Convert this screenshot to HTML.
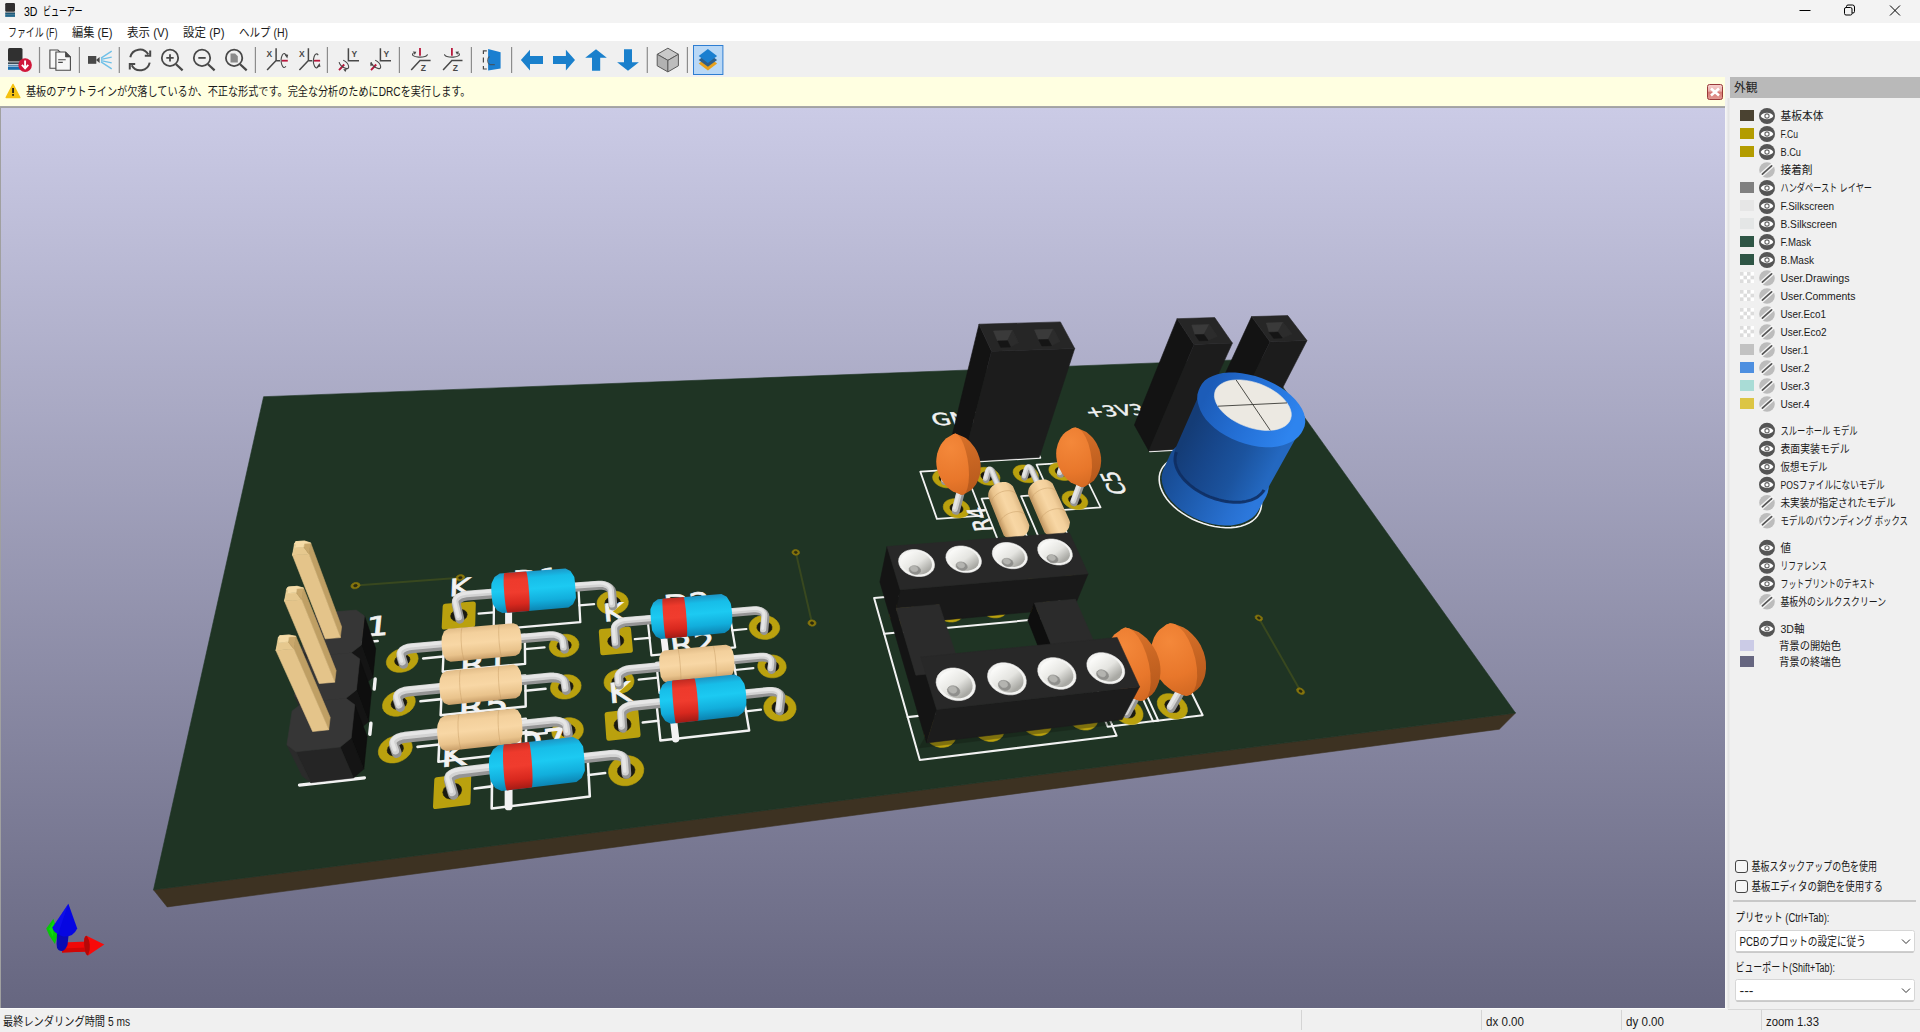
<!DOCTYPE html>
<html lang="ja"><head><meta charset="utf-8"><title>3D ビューアー</title>
<style>
html,body{margin:0;padding:0;}
body{width:1920px;height:1032px;overflow:hidden;position:relative;background:#f0f0f0;font-family:"Liberation Sans","Noto Sans CJK JP",sans-serif;}
.abs{position:absolute;}
#titlebar{left:0;top:0;width:1920px;height:23px;background:#f3f3f3;}
#menubar{left:0;top:23px;width:1920px;height:18px;background:#fff;}
#toolbar{left:0;top:41px;width:1920px;height:36px;background:#f0f0f0;}
#infobar{left:0;top:77px;width:1725px;height:30px;background:#ffffe1;}
#canvas{left:0;top:107px;width:1725px;height:901px;background:#a0a0a0;}
#panel{left:1725px;top:77px;width:195px;height:931px;background:#f0f0f0;}
#panelhead{left:1730px;top:77px;width:190px;height:21px;background:#b9b9b9;}
#statusbar{left:0;top:1008px;width:1920px;height:24px;background:#f0f0f0;}
svg{position:absolute;left:0;top:0;}
text{font-family:"Liberation Sans","Noto Sans CJK JP",sans-serif;}
</style></head><body>
<div id="titlebar" class="abs"></div>
<div id="menubar" class="abs"></div>
<div id="toolbar" class="abs"></div>
<div id="infobar" class="abs"></div>
<div id="canvas" class="abs"></div>
<div id="panel" class="abs"></div>
<div id="panelhead" class="abs"></div>
<div id="statusbar" class="abs"></div>

<svg id="scene" width="1725" height="901" viewBox="0 107 1725 901" style="left:0;top:107px"><defs><linearGradient id="bg" x1="0" y1="0" x2="0" y2="1"><stop offset="0" stop-color="#cbcbe6"/><stop offset="1" stop-color="#666680"/></linearGradient><linearGradient id="gecapf" gradientUnits="userSpaceOnUse" x1="1168.8" y1="469.6" x2="1251.5" y2="510.7"><stop offset="0" stop-color="#184c94"/><stop offset="0.4" stop-color="#1f5eb2"/><stop offset="0.8" stop-color="#2870d0"/><stop offset="1" stop-color="#2c78dc"/></linearGradient><linearGradient id="gecap" gradientUnits="userSpaceOnUse" x1="1190.1" y1="426.8" x2="1272.8" y2="467.9"><stop offset="0" stop-color="#143c76"/><stop offset="0.3" stop-color="#17468a"/><stop offset="0.65" stop-color="#1b539e"/><stop offset="0.9" stop-color="#2162b6"/><stop offset="1" stop-color="#2468c0"/></linearGradient><linearGradient id="gecapt" gradientUnits="userSpaceOnUse" x1="1211.4" y1="384.0" x2="1294.1" y2="425.1"><stop offset="0" stop-color="#1c5cb8"/><stop offset="0.5" stop-color="#2470d6"/><stop offset="1" stop-color="#2e84ee"/></linearGradient><radialGradient id="g1" gradientUnits="userSpaceOnUse" cx="1070.8" cy="441.8" r="61.3"><stop offset="0" stop-color="#f4883a"/><stop offset="0.5" stop-color="#e8772b"/><stop offset="1" stop-color="#c45f1c"/></radialGradient><linearGradient id="g2" gradientUnits="userSpaceOnUse" x1="1078.4" y1="426.5" x2="1096.8" y2="487.8"><stop offset="0" stop-color="#d9722a"/><stop offset="1" stop-color="#b3561a"/></linearGradient><linearGradient id="g3" gradientUnits="userSpaceOnUse" x1="1060.2" y1="503.0" x2="1037.3" y2="513.2"><stop offset="0" stop-color="#dfba86"/><stop offset="0.2" stop-color="#f3d09c"/><stop offset="0.5" stop-color="#f8d7a5"/><stop offset="0.8" stop-color="#e9c38c"/><stop offset="1" stop-color="#c59b66"/></linearGradient><linearGradient id="g4" gradientUnits="userSpaceOnUse" x1="1020.4" y1="506.0" x2="996.8" y2="515.8"><stop offset="0" stop-color="#dfba86"/><stop offset="0.2" stop-color="#f3d09c"/><stop offset="0.5" stop-color="#f8d7a5"/><stop offset="0.8" stop-color="#e9c38c"/><stop offset="1" stop-color="#c59b66"/></linearGradient><radialGradient id="g5" gradientUnits="userSpaceOnUse" cx="950.3" cy="448.0" r="64.6"><stop offset="0" stop-color="#f4883a"/><stop offset="0.5" stop-color="#e8772b"/><stop offset="1" stop-color="#c45f1c"/></radialGradient><linearGradient id="g6" gradientUnits="userSpaceOnUse" x1="958.3" y1="431.9" x2="977.7" y2="496.5"><stop offset="0" stop-color="#d9722a"/><stop offset="1" stop-color="#b3561a"/></linearGradient><radialGradient id="g7" gradientUnits="userSpaceOnUse" cx="1169.3" cy="641.5" r="70.6"><stop offset="0" stop-color="#f4883a"/><stop offset="0.5" stop-color="#e8772b"/><stop offset="1" stop-color="#c45f1c"/></radialGradient><linearGradient id="g8" gradientUnits="userSpaceOnUse" x1="1178.1" y1="623.9" x2="1199.3" y2="694.5"><stop offset="0" stop-color="#d9722a"/><stop offset="1" stop-color="#b3561a"/></linearGradient><radialGradient id="g9" gradientUnits="userSpaceOnUse" cx="1123.9" cy="646.0" r="72.1"><stop offset="0" stop-color="#f4883a"/><stop offset="0.5" stop-color="#e8772b"/><stop offset="1" stop-color="#c45f1c"/></radialGradient><linearGradient id="g10" gradientUnits="userSpaceOnUse" x1="1132.9" y1="628.0" x2="1154.5" y2="700.0"><stop offset="0" stop-color="#d9722a"/><stop offset="1" stop-color="#b3561a"/></linearGradient><linearGradient id="g11" gradientUnits="userSpaceOnUse" x1="907.6" y1="552.4" x2="924.0" y2="573.4"><stop offset="0" stop-color="#fafaf8"/><stop offset="0.55" stop-color="#e4e4e0"/><stop offset="1" stop-color="#a9a9a4"/></linearGradient><linearGradient id="g12" gradientUnits="userSpaceOnUse" x1="954.9" y1="548.9" x2="971.0" y2="569.4"><stop offset="0" stop-color="#fafaf8"/><stop offset="0.55" stop-color="#e4e4e0"/><stop offset="1" stop-color="#a9a9a4"/></linearGradient><linearGradient id="g13" gradientUnits="userSpaceOnUse" x1="1001.2" y1="545.4" x2="1017.0" y2="565.5"><stop offset="0" stop-color="#fafaf8"/><stop offset="0.55" stop-color="#e4e4e0"/><stop offset="1" stop-color="#a9a9a4"/></linearGradient><linearGradient id="g14" gradientUnits="userSpaceOnUse" x1="1046.6" y1="542.0" x2="1062.1" y2="561.7"><stop offset="0" stop-color="#fafaf8"/><stop offset="0.55" stop-color="#e4e4e0"/><stop offset="1" stop-color="#a9a9a4"/></linearGradient><linearGradient id="g15" gradientUnits="userSpaceOnUse" x1="946.0" y1="672.7" x2="963.9" y2="695.5"><stop offset="0" stop-color="#fafaf8"/><stop offset="0.55" stop-color="#e4e4e0"/><stop offset="1" stop-color="#a9a9a4"/></linearGradient><linearGradient id="g16" gradientUnits="userSpaceOnUse" x1="997.3" y1="667.4" x2="1014.9" y2="689.8"><stop offset="0" stop-color="#fafaf8"/><stop offset="0.55" stop-color="#e4e4e0"/><stop offset="1" stop-color="#a9a9a4"/></linearGradient><linearGradient id="g17" gradientUnits="userSpaceOnUse" x1="1047.6" y1="662.3" x2="1064.7" y2="684.2"><stop offset="0" stop-color="#fafaf8"/><stop offset="0.55" stop-color="#e4e4e0"/><stop offset="1" stop-color="#a9a9a4"/></linearGradient><linearGradient id="g18" gradientUnits="userSpaceOnUse" x1="1096.7" y1="657.3" x2="1113.4" y2="678.7"><stop offset="0" stop-color="#fafaf8"/><stop offset="0.55" stop-color="#e4e4e0"/><stop offset="1" stop-color="#a9a9a4"/></linearGradient><linearGradient id="g19" gradientUnits="userSpaceOnUse" x1="532.2" y1="570.2" x2="535.5" y2="611.2"><stop offset="0" stop-color="#1d93c4"/><stop offset="0.18" stop-color="#17bde8"/><stop offset="0.45" stop-color="#1ccaf2"/><stop offset="0.75" stop-color="#12aedc"/><stop offset="1" stop-color="#0c82b0"/></linearGradient><linearGradient id="g20" gradientUnits="userSpaceOnUse" x1="515.2" y1="571.3" x2="518.5" y2="612.8"><stop offset="0" stop-color="#c02a20"/><stop offset="0.2" stop-color="#ee3a2c"/><stop offset="0.5" stop-color="#f03c2e"/><stop offset="0.78" stop-color="#d8281e"/><stop offset="1" stop-color="#a01a14"/></linearGradient><linearGradient id="g21" gradientUnits="userSpaceOnUse" x1="689.4" y1="596.6" x2="692.8" y2="636.2"><stop offset="0" stop-color="#1d93c4"/><stop offset="0.18" stop-color="#17bde8"/><stop offset="0.45" stop-color="#1ccaf2"/><stop offset="0.75" stop-color="#12aedc"/><stop offset="1" stop-color="#0c82b0"/></linearGradient><linearGradient id="g22" gradientUnits="userSpaceOnUse" x1="672.9" y1="597.8" x2="676.4" y2="637.8"><stop offset="0" stop-color="#c02a20"/><stop offset="0.2" stop-color="#ee3a2c"/><stop offset="0.5" stop-color="#f03c2e"/><stop offset="0.78" stop-color="#d8281e"/><stop offset="1" stop-color="#a01a14"/></linearGradient><linearGradient id="g23" gradientUnits="userSpaceOnUse" x1="480.4" y1="625.2" x2="483.4" y2="659.4"><stop offset="0" stop-color="#dfba86"/><stop offset="0.2" stop-color="#f3d09c"/><stop offset="0.5" stop-color="#f8d7a5"/><stop offset="0.8" stop-color="#e9c38c"/><stop offset="1" stop-color="#c59b66"/></linearGradient><linearGradient id="g24" gradientUnits="userSpaceOnUse" x1="695.0" y1="647.5" x2="698.2" y2="679.8"><stop offset="0" stop-color="#dfba86"/><stop offset="0.2" stop-color="#f3d09c"/><stop offset="0.5" stop-color="#f8d7a5"/><stop offset="0.8" stop-color="#e9c38c"/><stop offset="1" stop-color="#c59b66"/></linearGradient><linearGradient id="g25" gradientUnits="userSpaceOnUse" x1="479.3" y1="667.0" x2="482.8" y2="702.3"><stop offset="0" stop-color="#dfba86"/><stop offset="0.2" stop-color="#f3d09c"/><stop offset="0.5" stop-color="#f8d7a5"/><stop offset="0.8" stop-color="#e9c38c"/><stop offset="1" stop-color="#c59b66"/></linearGradient><linearGradient id="g26" gradientUnits="userSpaceOnUse" x1="700.4" y1="677.9" x2="704.8" y2="719.9"><stop offset="0" stop-color="#1d93c4"/><stop offset="0.18" stop-color="#17bde8"/><stop offset="0.45" stop-color="#1ccaf2"/><stop offset="0.75" stop-color="#12aedc"/><stop offset="1" stop-color="#0c82b0"/></linearGradient><linearGradient id="g27" gradientUnits="userSpaceOnUse" x1="682.9" y1="679.5" x2="687.4" y2="722.0"><stop offset="0" stop-color="#c02a20"/><stop offset="0.2" stop-color="#ee3a2c"/><stop offset="0.5" stop-color="#f03c2e"/><stop offset="0.78" stop-color="#d8281e"/><stop offset="1" stop-color="#a01a14"/></linearGradient><linearGradient id="g28" gradientUnits="userSpaceOnUse" x1="478.2" y1="711.5" x2="482.1" y2="747.9"><stop offset="0" stop-color="#dfba86"/><stop offset="0.2" stop-color="#f3d09c"/><stop offset="0.5" stop-color="#f8d7a5"/><stop offset="0.8" stop-color="#e9c38c"/><stop offset="1" stop-color="#c59b66"/></linearGradient><linearGradient id="g29" gradientUnits="userSpaceOnUse" x1="534.6" y1="740.6" x2="539.9" y2="787.1"><stop offset="0" stop-color="#1d93c4"/><stop offset="0.18" stop-color="#17bde8"/><stop offset="0.45" stop-color="#1ccaf2"/><stop offset="0.75" stop-color="#12aedc"/><stop offset="1" stop-color="#0c82b0"/></linearGradient><linearGradient id="g30" gradientUnits="userSpaceOnUse" x1="515.3" y1="742.5" x2="520.6" y2="789.6"><stop offset="0" stop-color="#c02a20"/><stop offset="0.2" stop-color="#ee3a2c"/><stop offset="0.5" stop-color="#f03c2e"/><stop offset="0.78" stop-color="#d8281e"/><stop offset="1" stop-color="#a01a14"/></linearGradient></defs><rect x="1" y="108" width="1724" height="900" fill="url(#bg)"/><polygon points="153.5,889.8 1515.5,713.0 1499.3,729.2 167.2,906.9" fill="#3d3222" stroke="#3d3222" stroke-width="0.6" stroke-linejoin="round"/><polygon points="153.5,889.8 1515.5,713.0 1262.8,358.9 263.6,396.7" fill="#1f3424" stroke="#1f3424" stroke-width="0.6" stroke-linejoin="round"/><line x1="355.5" y1="585.6" x2="460.3" y2="577.7" stroke="#3f4d1e" stroke-width="2" opacity="0.8"/><line x1="795.8" y1="552.4" x2="812.0" y2="623.0" stroke="#3f4d1e" stroke-width="2" opacity="0.8"/><line x1="1258.8" y1="617.9" x2="1300.5" y2="691.1" stroke="#3f4d1e" stroke-width="2" opacity="0.8"/><polygon points="360.1,585.3 359.4,583.4 357.3,582.4 354.4,582.6 351.9,584.0 350.8,586.0 351.5,587.8 353.6,588.8 356.5,588.6 359.0,587.2" fill="#85740c" stroke="#85740c" stroke-width="0.6" stroke-linejoin="round"/><polygon points="357.4,585.5 356.9,584.6 355.6,584.3 354.2,584.8 353.6,585.7 354.0,586.7 355.3,586.9 356.7,586.4" fill="#2a2a10" stroke="#2a2a10" stroke-width="0.6" stroke-linejoin="round"/><polygon points="464.8,577.4 464.0,575.6 461.8,574.6 459.1,574.8 456.8,576.1 455.9,578.0 456.6,579.8 458.8,580.8 461.6,580.6 463.9,579.3" fill="#85740c" stroke="#85740c" stroke-width="0.6" stroke-linejoin="round"/><polygon points="462.1,577.6 461.6,576.7 460.4,576.4 459.1,576.9 458.5,577.8 459.0,578.7 460.3,579.0 461.6,578.5" fill="#2a2a10" stroke="#2a2a10" stroke-width="0.6" stroke-linejoin="round"/><polygon points="799.6,552.1 798.5,550.4 796.3,549.5 794.0,549.7 792.3,550.9 791.9,552.7 793.0,554.3 795.2,555.2 797.6,555.0 799.3,553.8" fill="#85740c" stroke="#85740c" stroke-width="0.6" stroke-linejoin="round"/><polygon points="797.4,552.3 796.7,551.4 795.5,551.2 794.5,551.6 794.2,552.5 794.9,553.3 796.1,553.6 797.1,553.1" fill="#2a2a10" stroke="#2a2a10" stroke-width="0.6" stroke-linejoin="round"/><polygon points="816.1,622.7 814.9,620.8 812.6,619.9 810.1,620.1 808.3,621.4 807.9,623.4 809.2,625.2 811.5,626.2 814.0,626.0 815.8,624.6" fill="#85740c" stroke="#85740c" stroke-width="0.6" stroke-linejoin="round"/><polygon points="813.7,622.9 813.0,622.0 811.7,621.7 810.6,622.2 810.4,623.2 811.1,624.1 812.3,624.4 813.4,623.9" fill="#2a2a10" stroke="#2a2a10" stroke-width="0.6" stroke-linejoin="round"/><polygon points="1262.3,617.6 1260.6,615.9 1258.3,615.0 1256.2,615.2 1255.1,616.5 1255.4,618.3 1257.1,620.0 1259.4,620.9 1261.5,620.7 1262.6,619.4" fill="#85740c" stroke="#85740c" stroke-width="0.6" stroke-linejoin="round"/><polygon points="1260.2,617.8 1259.3,617.0 1258.1,616.7 1257.3,617.2 1257.4,618.1 1258.3,618.9 1259.5,619.2 1260.3,618.7" fill="#2a2a10" stroke="#2a2a10" stroke-width="0.6" stroke-linejoin="round"/><polygon points="1304.1,690.7 1302.3,688.8 1299.8,687.8 1297.6,688.1 1296.5,689.5 1297.0,691.5 1298.8,693.4 1301.3,694.4 1303.5,694.2 1304.6,692.7" fill="#85740c" stroke="#85740c" stroke-width="0.6" stroke-linejoin="round"/><polygon points="1302.0,690.9 1301.0,690.0 1299.8,689.8 1299.0,690.3 1299.1,691.3 1300.1,692.2 1301.3,692.5 1302.1,692.0" fill="#2a2a10" stroke="#2a2a10" stroke-width="0.6" stroke-linejoin="round"/><polygon points="493.7,629.6 580.3,622.1 578.5,589.0 494.0,595.7" fill="none" stroke="#f2f2f2" stroke-width="2.3" stroke-linejoin="round" stroke-linecap="round"/><polyline points="478.6,613.7 493.9,612.4" fill="none" stroke="#f2f2f2" stroke-width="2.3" stroke-linejoin="round" stroke-linecap="round"/><polyline points="579.4,605.3 594.1,604.1" fill="none" stroke="#f2f2f2" stroke-width="2.3" stroke-linejoin="round" stroke-linecap="round"/><polyline points="508.6,628.3 508.6,594.6" fill="none" stroke="#f2f2f2" stroke-width="7.0" stroke-linejoin="round" stroke-linecap="round"/><polygon points="491.7,808.5 589.8,796.5 587.5,754.2 492.2,765.0" fill="none" stroke="#f2f2f2" stroke-width="2.6" stroke-linejoin="round" stroke-linecap="round"/><polyline points="474.7,788.5 491.9,786.4" fill="none" stroke="#f2f2f2" stroke-width="2.7" stroke-linejoin="round" stroke-linecap="round"/><polyline points="588.7,775.0 605.2,773.1" fill="none" stroke="#f2f2f2" stroke-width="2.5" stroke-linejoin="round" stroke-linecap="round"/><polyline points="508.6,806.4 508.6,763.2" fill="none" stroke="#f2f2f2" stroke-width="7.9" stroke-linejoin="round" stroke-linecap="round"/><polygon points="651.4,655.3 735.2,647.3 729.5,613.7 647.8,620.8" fill="none" stroke="#f2f2f2" stroke-width="2.2" stroke-linejoin="round" stroke-linecap="round"/><polyline points="634.8,639.1 649.6,637.8" fill="none" stroke="#f2f2f2" stroke-width="2.3" stroke-linejoin="round" stroke-linecap="round"/><polyline points="732.3,630.3 746.4,629.0" fill="none" stroke="#f2f2f2" stroke-width="2.2" stroke-linejoin="round" stroke-linecap="round"/><polyline points="665.8,653.9 661.8,619.6" fill="none" stroke="#f2f2f2" stroke-width="6.7" stroke-linejoin="round" stroke-linecap="round"/><polygon points="660.4,740.5 749.2,730.5 742.8,692.6 656.3,701.6" fill="none" stroke="#f2f2f2" stroke-width="2.4" stroke-linejoin="round" stroke-linecap="round"/><polyline points="642.7,722.5 658.3,720.8" fill="none" stroke="#f2f2f2" stroke-width="2.4" stroke-linejoin="round" stroke-linecap="round"/><polyline points="745.9,711.3 760.9,709.7" fill="none" stroke="#f2f2f2" stroke-width="2.3" stroke-linejoin="round" stroke-linecap="round"/><polyline points="675.7,738.8 671.2,700.1" fill="none" stroke="#f2f2f2" stroke-width="7.2" stroke-linejoin="round" stroke-linecap="round"/><polygon points="438.4,761.7 526.2,751.9 525.8,718.7 440.0,727.7" fill="none" stroke="#f2f2f2" stroke-width="2.6" stroke-linejoin="round" stroke-linecap="round"/><polyline points="417.5,746.9 439.2,744.5" fill="none" stroke="#f2f2f2" stroke-width="2.6" stroke-linejoin="round" stroke-linecap="round"/><polyline points="526.0,735.1 546.8,732.9" fill="none" stroke="#f2f2f2" stroke-width="2.5" stroke-linejoin="round" stroke-linecap="round"/><polygon points="440.6,715.2 525.7,706.5 525.3,675.4 442.1,683.4" fill="none" stroke="#f2f2f2" stroke-width="2.5" stroke-linejoin="round" stroke-linecap="round"/><polyline points="420.4,701.2 441.4,699.1" fill="none" stroke="#f2f2f2" stroke-width="2.6" stroke-linejoin="round" stroke-linecap="round"/><polyline points="525.5,690.8 545.6,688.8" fill="none" stroke="#f2f2f2" stroke-width="2.4" stroke-linejoin="round" stroke-linecap="round"/><polygon points="442.7,671.7 525.1,663.9 524.8,634.7 444.1,641.7" fill="none" stroke="#f2f2f2" stroke-width="2.4" stroke-linejoin="round" stroke-linecap="round"/><polyline points="423.1,658.4 443.4,656.5" fill="none" stroke="#f2f2f2" stroke-width="2.5" stroke-linejoin="round" stroke-linecap="round"/><polyline points="525.0,649.1 544.5,647.4" fill="none" stroke="#f2f2f2" stroke-width="2.4" stroke-linejoin="round" stroke-linecap="round"/><polygon points="659.5,692.8 737.4,684.8 732.6,655.5 656.3,662.8" fill="none" stroke="#f2f2f2" stroke-width="2.3" stroke-linejoin="round" stroke-linecap="round"/><polyline points="638.7,679.6 657.9,677.6" fill="none" stroke="#f2f2f2" stroke-width="2.3" stroke-linejoin="round" stroke-linecap="round"/><polyline points="735.0,670.0 753.4,668.1" fill="none" stroke="#f2f2f2" stroke-width="2.2" stroke-linejoin="round" stroke-linecap="round"/><polyline points="299.5,785.1 364.4,777.8" fill="none" stroke="#f2f2f2" stroke-width="3.3" stroke-linejoin="round" stroke-linecap="round"/><polyline points="319.1,646.1 377.7,641.0" fill="none" stroke="#f2f2f2" stroke-width="2.5" stroke-linejoin="round" stroke-linecap="round"/><polyline points="369.8,734.2 370.9,723.3" fill="none" stroke="#f2f2f2" stroke-width="3.5" stroke-linejoin="round" stroke-linecap="round"/><polyline points="374.2,689.1 375.2,678.9" fill="none" stroke="#f2f2f2" stroke-width="3.4" stroke-linejoin="round" stroke-linecap="round"/><polygon points="936.9,518.9 982.6,515.7 964.3,469.0 920.3,471.6" fill="none" stroke="#f2f2f2" stroke-width="1.8" stroke-linejoin="round" stroke-linecap="round"/><polygon points="1057.3,510.4 1100.6,507.4 1078.4,462.2 1036.5,464.7" fill="none" stroke="#f2f2f2" stroke-width="1.7" stroke-linejoin="round" stroke-linecap="round"/><polygon points="1107.7,726.7 1158.3,720.6 1129.7,658.0 1080.9,663.1" fill="none" stroke="#f2f2f2" stroke-width="2.0" stroke-linejoin="round" stroke-linecap="round"/><polygon points="1153.0,721.2 1202.7,715.2 1172.3,653.5 1124.6,658.5" fill="none" stroke="#f2f2f2" stroke-width="2.0" stroke-linejoin="round" stroke-linecap="round"/><polygon points="1000.0,545.3 1029.7,543.0 1010.3,496.8 981.6,498.7" fill="none" stroke="#f2f2f2" stroke-width="1.8" stroke-linejoin="round" stroke-linecap="round"/><polygon points="1040.8,542.2 1070.0,539.9 1049.2,494.2 1021.1,496.1" fill="none" stroke="#f2f2f2" stroke-width="1.8" stroke-linejoin="round" stroke-linecap="round"/><polyline points="963.9,462.3 1040.4,457.9 1027.6,429.9" fill="none" stroke="#f2f2f2" stroke-width="1.7" stroke-linejoin="round" stroke-linecap="round"/><polyline points="1149.8,451.5 1185.4,449.4 1169.6,422.6" fill="none" stroke="#f2f2f2" stroke-width="1.6" stroke-linejoin="round" stroke-linecap="round"/><polyline points="1219.9,447.4 1254.4,445.4 1237.2,419.0" fill="none" stroke="#f2f2f2" stroke-width="1.5" stroke-linejoin="round" stroke-linecap="round"/><polygon points="919.8,760.0 1116.6,735.7 1051.7,582.6 874.1,598.0" fill="none" stroke="#f2f2f2" stroke-width="2.0" stroke-linejoin="round" stroke-linecap="round"/><polyline points="907.7,717.1 1099.5,695.4" fill="none" stroke="#f2f2f2" stroke-width="2.1" stroke-linejoin="round" stroke-linecap="round"/><polyline points="884.2,633.8 1066.1,616.6" fill="none" stroke="#f2f2f2" stroke-width="2.0" stroke-linejoin="round" stroke-linecap="round"/><polygon points="1256.1,487.0 1253.5,483.2 1250.4,479.6 1246.8,476.0 1242.9,472.7 1238.6,469.5 1234.1,466.6 1229.3,464.0 1224.2,461.6 1219.1,459.6 1213.9,457.9 1208.6,456.6 1203.3,455.6 1198.1,455.1 1193.1,454.9 1188.2,455.1 1183.6,455.6 1179.2,456.6 1175.2,457.9 1171.5,459.6 1168.2,461.7 1165.4,464.0 1163.1,466.7 1161.3,469.7 1160.0,472.9 1159.3,476.3 1159.2,479.9 1159.6,483.6 1160.6,487.5 1162.2,491.4 1164.3,495.3 1167.0,499.2 1170.2,503.0 1173.9,506.6 1178.0,510.1 1182.6,513.4 1187.4,516.4 1192.6,519.2 1197.9,521.6 1203.4,523.6 1209.1,525.2 1214.7,526.5 1220.2,527.3 1225.7,527.7 1231.0,527.6 1236.0,527.1 1240.7,526.2 1245.0,524.8 1248.9,523.1 1252.3,521.0 1255.2,518.5 1257.6,515.7 1259.4,512.7 1260.7,509.4 1261.4,505.9 1261.5,502.3 1261.0,498.5 1259.9,494.7 1258.3,490.8 1256.1,487.0" fill="none" stroke="#f2f2f2" stroke-width="1.6" stroke-linejoin="round" stroke-linecap="round"/><polygon points="412.3,747.4 411.9,744.0 410.5,741.0 408.0,738.5 404.7,736.7 400.7,735.9 396.4,735.9 392.0,736.8 387.8,738.5 384.2,741.0 381.2,744.1 379.2,747.5 378.3,751.1 378.6,754.6 380.0,757.7 382.5,760.2 385.9,762.0 389.9,762.9 394.3,762.9 398.8,762.0 403.0,760.1 406.7,757.6 409.6,754.4 411.5,751.0" fill="#baa10e" stroke="#baa10e" stroke-width="0.6" stroke-linejoin="round"/><polygon points="403.5,748.4 402.9,745.6 400.8,743.6 397.7,742.7 394.0,743.1 390.7,744.7 388.2,747.2 387.2,750.2 387.7,752.9 389.8,754.9 393.0,755.9 396.7,755.5 400.1,753.8 402.5,751.3" fill="#1a1a10" stroke="#1a1a10" stroke-width="0.6" stroke-linejoin="round"/><polygon points="583.4,728.9 582.7,725.6 581.0,722.7 578.4,720.4 575.0,718.7 571.2,717.8 567.1,717.8 563.1,718.7 559.3,720.3 556.1,722.7 553.7,725.6 552.2,728.9 551.8,732.3 552.4,735.6 554.1,738.6 556.7,741.0 560.1,742.7 564.0,743.6 568.2,743.6 572.3,742.7 576.1,741.0 579.3,738.5 581.7,735.6 583.1,732.3" fill="#baa10e" stroke="#baa10e" stroke-width="0.6" stroke-linejoin="round"/><polygon points="575.3,729.8 574.4,727.2 572.2,725.2 569.1,724.4 565.7,724.7 562.7,726.3 560.7,728.6 560.0,731.4 560.8,734.1 563.1,736.0 566.2,736.9 569.6,736.5 572.6,735.0 574.7,732.6" fill="#1a1a10" stroke="#1a1a10" stroke-width="0.6" stroke-linejoin="round"/><polygon points="415.3,701.7 415.0,698.5 413.5,695.7 411.1,693.3 407.9,691.7 404.1,690.8 399.9,690.8 395.7,691.6 391.6,693.3 388.1,695.6 385.2,698.4 383.3,701.7 382.5,705.0 382.7,708.2 384.1,711.2 386.5,713.6 389.8,715.3 393.7,716.2 397.9,716.2 402.3,715.3 406.3,713.6 409.9,711.2 412.7,708.3 414.5,705.1" fill="#baa10e" stroke="#baa10e" stroke-width="0.6" stroke-linejoin="round"/><polygon points="406.9,702.6 406.3,700.0 404.2,698.1 401.2,697.2 397.6,697.6 394.4,699.1 392.0,701.4 391.0,704.2 391.6,706.7 393.6,708.7 396.7,709.5 400.2,709.2 403.5,707.7 405.9,705.3" fill="#1a1a10" stroke="#1a1a10" stroke-width="0.6" stroke-linejoin="round"/><polygon points="581.1,685.3 580.5,682.2 578.8,679.5 576.2,677.2 573.0,675.6 569.3,674.8 565.3,674.8 561.4,675.6 557.8,677.1 554.7,679.3 552.3,682.1 550.9,685.1 550.4,688.3 551.0,691.4 552.7,694.2 555.2,696.5 558.5,698.2 562.3,699.0 566.3,699.0 570.3,698.2 574.0,696.6 577.1,694.3 579.4,691.5 580.8,688.4" fill="#baa10e" stroke="#baa10e" stroke-width="0.6" stroke-linejoin="round"/><polygon points="573.2,686.0 572.4,683.6 570.2,681.8 567.2,680.9 563.9,681.3 561.0,682.7 559.0,684.9 558.4,687.5 559.2,690.0 561.4,691.8 564.4,692.7 567.7,692.3 570.7,690.9 572.6,688.7" fill="#1a1a10" stroke="#1a1a10" stroke-width="0.6" stroke-linejoin="round"/><polygon points="418.2,658.8 417.8,655.8 416.4,653.1 414.1,650.9 411.0,649.3 407.3,648.5 403.2,648.5 399.1,649.2 395.2,650.7 391.8,652.9 389.0,655.6 387.2,658.6 386.3,661.7 386.6,664.8 388.0,667.5 390.3,669.8 393.5,671.4 397.2,672.3 401.4,672.3 405.5,671.5 409.5,669.9 412.9,667.7 415.6,665.0 417.4,662.0" fill="#baa10e" stroke="#baa10e" stroke-width="0.6" stroke-linejoin="round"/><polygon points="410.0,659.6 409.4,657.2 407.4,655.4 404.4,654.5 401.0,654.9 397.9,656.2 395.6,658.4 394.6,661.0 395.2,663.4 397.1,665.2 400.1,666.1 403.6,665.8 406.7,664.4 409.0,662.2" fill="#1a1a10" stroke="#1a1a10" stroke-width="0.6" stroke-linejoin="round"/><polygon points="579.0,644.2 578.3,641.3 576.7,638.7 574.2,636.6 571.1,635.1 567.5,634.3 563.6,634.3 559.8,635.0 556.3,636.4 553.3,638.5 551.0,641.0 549.6,643.9 549.2,646.9 549.8,649.9 551.4,652.5 553.8,654.7 557.0,656.2 560.7,657.1 564.6,657.1 568.5,656.3 572.0,654.8 575.0,652.7 577.3,650.1 578.6,647.2" fill="#baa10e" stroke="#baa10e" stroke-width="0.6" stroke-linejoin="round"/><polygon points="571.3,644.9 570.5,642.6 568.4,640.9 565.5,640.1 562.3,640.4 559.5,641.7 557.5,643.8 556.9,646.2 557.7,648.6 559.8,650.3 562.7,651.1 565.9,650.8 568.8,649.5 570.7,647.4" fill="#1a1a10" stroke="#1a1a10" stroke-width="0.6" stroke-linejoin="round"/><polygon points="444.2,627.0 472.7,624.6 473.3,603.9 445.2,606.2" fill="#baa10e" stroke="#baa10e" stroke-width="5" stroke-linejoin="round"/><polygon points="467.2,614.6 466.5,612.1 464.3,610.2 461.0,609.3 457.3,609.6 453.9,611.0 451.5,613.3 450.6,616.0 451.3,618.6 453.5,620.6 456.8,621.5 460.5,621.2 463.9,619.7 466.3,617.4" fill="#1a1a10" stroke="#1a1a10" stroke-width="0.6" stroke-linejoin="round"/><polygon points="628.3,601.3 627.5,598.3 625.7,595.6 623.0,593.5 619.7,591.9 615.8,591.0 611.8,591.0 607.8,591.7 604.1,593.1 601.0,595.2 598.7,597.9 597.3,600.8 597.0,603.9 597.8,606.9 599.5,609.6 602.2,611.9 605.6,613.5 609.5,614.3 613.7,614.4 617.7,613.6 621.4,612.1 624.5,610.0 626.8,607.3 628.1,604.4" fill="#baa10e" stroke="#baa10e" stroke-width="0.6" stroke-linejoin="round"/><polygon points="620.5,601.9 619.5,599.5 617.2,597.6 614.0,596.7 610.5,597.0 607.5,598.4 605.5,600.6 604.9,603.2 605.8,605.7 608.2,607.6 611.4,608.5 614.9,608.2 618.0,606.8 620.0,604.5" fill="#1a1a10" stroke="#1a1a10" stroke-width="0.6" stroke-linejoin="round"/><polygon points="435.5,806.5 468.0,802.6 468.7,776.1 436.8,779.7" fill="#baa10e" stroke="#baa10e" stroke-width="5" stroke-linejoin="round"/><polygon points="461.7,790.0 460.9,786.7 458.4,784.3 454.7,783.3 450.5,783.7 446.7,785.7 443.9,788.7 442.8,792.2 443.6,795.5 446.1,798.0 449.9,799.0 454.1,798.5 458.0,796.6 460.7,793.5" fill="#1a1a10" stroke="#1a1a10" stroke-width="0.6" stroke-linejoin="round"/><polygon points="643.8,768.5 642.8,764.8 640.7,761.4 637.7,758.7 633.9,756.8 629.6,755.8 625.0,755.8 620.5,756.8 616.4,758.8 612.9,761.6 610.4,764.9 608.8,768.7 608.5,772.7 609.4,776.5 611.4,780.0 614.5,782.8 618.3,784.7 622.8,785.7 627.4,785.7 632.0,784.6 636.1,782.6 639.6,779.7 642.1,776.3 643.5,772.5" fill="#baa10e" stroke="#baa10e" stroke-width="0.6" stroke-linejoin="round"/><polygon points="635.0,769.6 633.8,766.4 631.2,764.2 627.6,763.1 623.7,763.6 620.2,765.4 618.0,768.3 617.4,771.7 618.5,774.8 621.1,777.1 624.8,778.2 628.8,777.7 632.2,775.8 634.4,772.9" fill="#1a1a10" stroke="#1a1a10" stroke-width="0.6" stroke-linejoin="round"/><polygon points="602.8,652.8 630.4,650.2 628.5,629.2 601.3,631.6" fill="#baa10e" stroke="#baa10e" stroke-width="5" stroke-linejoin="round"/><polygon points="623.8,640.1 622.8,637.5 620.4,635.6 617.1,634.7 613.5,635.0 610.4,636.5 608.3,638.8 607.7,641.6 608.7,644.2 611.1,646.2 614.5,647.1 618.1,646.8 621.2,645.3 623.3,642.9" fill="#1a1a10" stroke="#1a1a10" stroke-width="0.6" stroke-linejoin="round"/><polygon points="779.5,626.0 778.4,623.0 776.3,620.3 773.5,618.0 770.0,616.5 766.1,615.6 762.2,615.6 758.4,616.3 755.0,617.8 752.2,619.9 750.2,622.6 749.2,625.6 749.3,628.7 750.4,631.8 752.4,634.6 755.3,636.8 758.8,638.5 762.8,639.3 766.8,639.4 770.7,638.6 774.1,637.1 776.8,634.8 778.7,632.1 779.7,629.1" fill="#baa10e" stroke="#baa10e" stroke-width="0.6" stroke-linejoin="round"/><polygon points="772.0,626.7 770.8,624.2 768.3,622.3 765.0,621.4 761.7,621.7 758.9,623.1 757.2,625.4 756.9,628.1 758.1,630.6 760.6,632.5 763.9,633.4 767.3,633.0 770.1,631.6 771.8,629.3" fill="#1a1a10" stroke="#1a1a10" stroke-width="0.6" stroke-linejoin="round"/><polygon points="634.0,680.0 633.2,677.0 631.5,674.3 628.9,672.1 625.7,670.5 622.0,669.7 618.1,669.7 614.3,670.4 610.8,672.0 607.8,674.1 605.6,676.8 604.3,679.8 604.0,683.0 604.7,686.1 606.4,688.8 609.0,691.1 612.3,692.7 616.1,693.5 620.0,693.5 623.9,692.7 627.4,691.2 630.4,688.9 632.6,686.2 633.8,683.1" fill="#baa10e" stroke="#baa10e" stroke-width="0.6" stroke-linejoin="round"/><polygon points="626.3,680.8 625.4,678.4 623.2,676.6 620.2,675.7 617.0,676.1 614.2,677.4 612.3,679.6 611.8,682.2 612.7,684.7 614.9,686.5 617.9,687.3 621.1,687.0 623.9,685.6 625.8,683.4" fill="#1a1a10" stroke="#1a1a10" stroke-width="0.6" stroke-linejoin="round"/><polygon points="786.0,664.9 785.0,662.0 783.0,659.4 780.3,657.3 777.1,655.8 773.5,655.0 769.8,655.0 766.2,655.7 763.1,657.1 760.5,659.2 758.7,661.8 757.8,664.7 757.9,667.7 758.9,670.6 760.8,673.3 763.5,675.5 766.8,677.0 770.5,677.8 774.2,677.8 777.8,677.1 781.0,675.6 783.6,673.4 785.3,670.8 786.2,667.9" fill="#baa10e" stroke="#baa10e" stroke-width="0.6" stroke-linejoin="round"/><polygon points="778.8,665.6 777.6,663.3 775.4,661.6 772.5,660.8 769.4,661.1 766.9,662.4 765.4,664.5 765.2,667.0 766.3,669.3 768.6,671.1 771.5,671.9 774.5,671.6 777.1,670.2 778.6,668.1" fill="#1a1a10" stroke="#1a1a10" stroke-width="0.6" stroke-linejoin="round"/><polygon points="608.8,738.3 638.1,735.1 635.9,711.3 607.1,714.4" fill="#baa10e" stroke="#baa10e" stroke-width="5" stroke-linejoin="round"/><polygon points="631.0,723.7 629.9,720.8 627.4,718.6 623.9,717.7 620.1,718.1 616.8,719.8 614.6,722.5 614.0,725.6 615.0,728.6 617.6,730.7 621.1,731.7 625.0,731.3 628.3,729.6 630.5,726.9" fill="#1a1a10" stroke="#1a1a10" stroke-width="0.6" stroke-linejoin="round"/><polygon points="795.9,705.9 794.7,702.5 792.4,699.5 789.4,697.0 785.7,695.3 781.6,694.3 777.4,694.3 773.4,695.2 769.8,696.9 766.9,699.4 764.8,702.4 763.8,705.8 763.9,709.3 765.1,712.8 767.3,715.9 770.4,718.4 774.2,720.2 778.3,721.1 782.6,721.1 786.7,720.2 790.3,718.4 793.2,715.9 795.1,712.8 796.1,709.4" fill="#baa10e" stroke="#baa10e" stroke-width="0.6" stroke-linejoin="round"/><polygon points="787.9,706.7 786.6,703.9 783.9,701.9 780.5,700.9 776.9,701.3 774.0,702.9 772.2,705.5 772.0,708.5 773.3,711.3 776.0,713.4 779.4,714.4 783.0,714.0 786.0,712.3 787.7,709.7" fill="#1a1a10" stroke="#1a1a10" stroke-width="0.6" stroke-linejoin="round"/><polygon points="955.5,731.8 953.9,728.3 951.4,725.3 948.1,722.8 944.3,721.0 940.2,720.1 936.1,720.1 932.3,721.0 929.0,722.8 926.4,725.3 924.8,728.4 924.2,731.8 924.7,735.4 926.3,738.9 928.8,742.0 932.1,744.6 936.0,746.4 940.1,747.4 944.3,747.3 948.2,746.4 951.5,744.6 954.0,742.0 955.6,738.8 956.1,735.4" fill="#baa10e" stroke="#baa10e" stroke-width="0.6" stroke-linejoin="round"/><polygon points="947.9,732.7 946.2,729.8 943.4,727.7 939.9,726.8 936.5,727.2 933.8,728.9 932.3,731.5 932.5,734.5 934.1,737.4 937.0,739.5 940.5,740.5 943.9,740.1 946.6,738.4 948.0,735.7" fill="#1a1a10" stroke="#1a1a10" stroke-width="0.6" stroke-linejoin="round"/><polygon points="1003.6,726.1 1001.9,722.7 999.3,719.7 996.0,717.2 992.2,715.5 988.1,714.6 984.1,714.6 980.4,715.5 977.2,717.2 974.8,719.7 973.3,722.7 972.8,726.1 973.5,729.7 975.1,733.1 977.7,736.2 981.0,738.7 984.9,740.5 989.1,741.5 993.1,741.4 996.9,740.5 1000.1,738.7 1002.5,736.2 1003.9,733.1 1004.3,729.6" fill="#baa10e" stroke="#baa10e" stroke-width="0.6" stroke-linejoin="round"/><polygon points="996.1,727.0 994.4,724.2 991.5,722.1 988.1,721.2 984.7,721.6 982.1,723.2 980.8,725.8 981.0,728.8 982.8,731.6 985.6,733.7 989.1,734.7 992.5,734.3 995.1,732.6 996.4,730.0" fill="#1a1a10" stroke="#1a1a10" stroke-width="0.6" stroke-linejoin="round"/><polygon points="1050.7,720.6 1048.9,717.2 1046.2,714.2 1042.9,711.8 1039.1,710.1 1035.1,709.2 1031.1,709.2 1027.5,710.1 1024.4,711.8 1022.1,714.2 1020.8,717.2 1020.4,720.6 1021.2,724.1 1022.9,727.4 1025.6,730.5 1028.9,733.0 1032.8,734.8 1036.9,735.7 1040.9,735.7 1044.6,734.7 1047.7,733.0 1050.0,730.5 1051.3,727.4 1051.5,724.0" fill="#baa10e" stroke="#baa10e" stroke-width="0.6" stroke-linejoin="round"/><polygon points="1043.4,721.4 1041.5,718.7 1038.7,716.6 1035.2,715.7 1032.0,716.1 1029.5,717.7 1028.3,720.2 1028.6,723.2 1030.4,726.0 1033.3,728.0 1036.7,729.0 1040.0,728.6 1042.5,726.9 1043.7,724.4" fill="#1a1a10" stroke="#1a1a10" stroke-width="0.6" stroke-linejoin="round"/><polygon points="1096.8,715.1 1094.9,711.8 1092.2,708.9 1088.8,706.5 1085.0,704.8 1081.0,703.9 1077.1,703.9 1073.6,704.8 1070.6,706.5 1068.5,708.9 1067.2,711.8 1067.0,715.1 1067.9,718.5 1069.7,721.9 1072.4,724.9 1075.8,727.4 1079.7,729.1 1083.8,730.0 1087.7,730.0 1091.3,729.1 1094.3,727.3 1096.4,724.9 1097.6,721.9 1097.7,718.6" fill="#baa10e" stroke="#baa10e" stroke-width="0.6" stroke-linejoin="round"/><polygon points="1089.6,716.0 1087.7,713.3 1084.8,711.2 1081.4,710.3 1078.2,710.7 1075.8,712.3 1074.7,714.8 1075.1,717.7 1077.0,720.4 1079.9,722.5 1083.4,723.4 1086.6,723.0 1089.0,721.4 1090.0,718.9" fill="#1a1a10" stroke="#1a1a10" stroke-width="0.6" stroke-linejoin="round"/><polygon points="918.5,613.4 917.1,610.5 914.8,607.8 911.9,605.7 908.4,604.2 904.7,603.4 900.9,603.3 897.3,604.0 894.3,605.4 891.8,607.5 890.3,610.1 889.6,612.9 890.0,615.9 891.4,618.9 893.6,621.5 896.6,623.7 900.1,625.3 904.0,626.2 907.8,626.2 911.4,625.5 914.5,624.0 916.9,621.9 918.4,619.3 918.9,616.4" fill="#baa10e" stroke="#baa10e" stroke-width="0.6" stroke-linejoin="round"/><polygon points="911.4,614.0 910.0,611.6 907.4,609.8 904.2,608.9 901.1,609.2 898.5,610.6 897.1,612.7 897.2,615.3 898.6,617.7 901.2,619.6 904.4,620.4 907.6,620.1 910.1,618.7 911.5,616.6" fill="#1a1a10" stroke="#1a1a10" stroke-width="0.6" stroke-linejoin="round"/><polygon points="963.0,609.3 961.5,606.4 959.2,603.9 956.2,601.8 952.7,600.2 949.0,599.4 945.3,599.4 941.9,600.1 938.9,601.5 936.6,603.5 935.1,606.0 934.6,608.9 935.1,611.9 936.5,614.8 938.8,617.4 941.8,619.5 945.4,621.1 949.2,621.9 952.9,622.0 956.4,621.2 959.4,619.8 961.7,617.7 963.1,615.1 963.6,612.3" fill="#baa10e" stroke="#baa10e" stroke-width="0.6" stroke-linejoin="round"/><polygon points="956.1,609.9 954.5,607.6 951.9,605.8 948.8,605.0 945.7,605.2 943.3,606.6 942.0,608.7 942.1,611.2 943.6,613.6 946.2,615.4 949.4,616.3 952.5,616.0 954.9,614.6 956.2,612.5" fill="#1a1a10" stroke="#1a1a10" stroke-width="0.6" stroke-linejoin="round"/><polygon points="1006.7,605.3 1005.1,602.5 1002.7,600.0 999.7,597.9 996.2,596.4 992.6,595.6 988.9,595.5 985.5,596.2 982.6,597.6 980.4,599.6 979.1,602.1 978.7,604.9 979.3,607.8 980.8,610.7 983.2,613.3 986.2,615.4 989.7,617.0 993.5,617.8 997.2,617.8 1000.6,617.1 1003.5,615.7 1005.7,613.6 1007.0,611.1 1007.3,608.3" fill="#baa10e" stroke="#baa10e" stroke-width="0.6" stroke-linejoin="round"/><polygon points="999.8,606.0 998.3,603.6 995.6,601.9 992.5,601.0 989.5,601.3 987.1,602.6 985.9,604.7 986.1,607.2 987.7,609.6 990.3,611.4 993.5,612.2 996.6,611.9 998.9,610.6 1000.1,608.4" fill="#1a1a10" stroke="#1a1a10" stroke-width="0.6" stroke-linejoin="round"/><polygon points="1049.5,601.5 1047.8,598.7 1045.4,596.1 1042.4,594.1 1038.9,592.6 1035.2,591.8 1031.6,591.7 1028.3,592.4 1025.6,593.8 1023.5,595.8 1022.2,598.2 1021.9,601.0 1022.6,603.9 1024.2,606.7 1026.6,609.3 1029.7,611.4 1033.2,612.9 1036.9,613.7 1040.6,613.8 1043.9,613.1 1046.7,611.7 1048.8,609.6 1050.0,607.1 1050.2,604.3" fill="#baa10e" stroke="#baa10e" stroke-width="0.6" stroke-linejoin="round"/><polygon points="1042.8,602.1 1041.1,599.7 1038.5,598.0 1035.4,597.2 1032.4,597.5 1030.2,598.8 1029.1,600.8 1029.4,603.3 1031.0,605.6 1033.6,607.4 1036.8,608.2 1039.8,607.9 1042.0,606.6 1043.1,604.5" fill="#1a1a10" stroke="#1a1a10" stroke-width="0.6" stroke-linejoin="round"/><polygon points="969.2,507.4 967.9,505.0 965.7,502.8 963.0,501.0 959.8,499.7 956.4,498.9 953.0,498.8 949.8,499.4 947.1,500.5 945.0,502.2 943.7,504.3 943.2,506.7 943.7,509.2 945.0,511.6 947.2,513.9 949.9,515.7 953.2,517.1 956.6,517.8 960.1,517.9 963.3,517.3 966.0,516.2 968.1,514.4 969.4,512.3 969.8,509.9" fill="#baa10e" stroke="#baa10e" stroke-width="0.6" stroke-linejoin="round"/><polygon points="962.9,507.9 961.5,505.8 959.1,504.3 956.2,503.6 953.4,503.8 951.2,504.8 950.0,506.6 950.1,508.7 951.5,510.8 953.9,512.3 956.8,513.1 959.7,512.9 961.9,511.8 963.0,510.0" fill="#1a1a10" stroke="#1a1a10" stroke-width="0.6" stroke-linejoin="round"/><polygon points="958.0,478.0 956.7,475.7 954.6,473.6 951.9,471.8 948.8,470.6 945.5,469.8 942.2,469.7 939.1,470.2 936.4,471.3 934.4,472.9 933.1,474.9 932.6,477.1 933.0,479.5 934.3,481.8 936.3,484.0 939.0,485.8 942.2,487.1 945.6,487.8 948.9,487.9 952.1,487.4 954.7,486.3 956.8,484.6 958.1,482.6 958.5,480.3" fill="#baa10e" stroke="#baa10e" stroke-width="0.6" stroke-linejoin="round"/><polygon points="951.8,478.4 950.4,476.4 948.1,475.0 945.3,474.2 942.5,474.4 940.3,475.4 939.2,477.1 939.3,479.1 940.6,481.1 942.9,482.5 945.8,483.3 948.6,483.1 950.8,482.1 951.9,480.4" fill="#1a1a10" stroke="#1a1a10" stroke-width="0.6" stroke-linejoin="round"/><polygon points="1037.8,567.3 1036.3,564.7 1033.9,562.3 1031.0,560.3 1027.6,558.9 1024.1,558.1 1020.5,558.0 1017.3,558.7 1014.6,559.9 1012.5,561.8 1011.3,564.1 1011.0,566.7 1011.6,569.5 1013.1,572.2 1015.5,574.6 1018.5,576.6 1021.9,578.1 1025.5,578.9 1029.1,578.9 1032.3,578.3 1035.1,576.9 1037.1,575.0 1038.3,572.7 1038.5,570.0" fill="#baa10e" stroke="#baa10e" stroke-width="0.6" stroke-linejoin="round"/><polygon points="1031.3,567.8 1029.7,565.6 1027.2,564.0 1024.1,563.2 1021.2,563.4 1019.0,564.7 1017.9,566.6 1018.2,568.9 1019.8,571.2 1022.3,572.8 1025.4,573.6 1028.3,573.4 1030.5,572.1 1031.6,570.2" fill="#1a1a10" stroke="#1a1a10" stroke-width="0.6" stroke-linejoin="round"/><polygon points="999.4,475.4 998.0,473.1 995.9,471.1 993.2,469.3 990.1,468.1 986.8,467.4 983.5,467.3 980.5,467.7 977.9,468.8 976.0,470.4 974.7,472.3 974.4,474.6 974.9,476.9 976.2,479.2 978.3,481.3 981.0,483.1 984.2,484.4 987.5,485.1 990.9,485.2 993.9,484.7 996.5,483.6 998.5,482.0 999.6,480.0 1000.0,477.8" fill="#baa10e" stroke="#baa10e" stroke-width="0.6" stroke-linejoin="round"/><polygon points="993.3,475.8 991.9,473.9 989.6,472.4 986.8,471.7 984.0,471.9 981.9,472.9 980.9,474.6 981.0,476.5 982.4,478.5 984.8,479.9 987.6,480.6 990.3,480.5 992.4,479.4 993.5,477.8" fill="#1a1a10" stroke="#1a1a10" stroke-width="0.6" stroke-linejoin="round"/><polygon points="1078.8,563.9 1077.2,561.3 1074.8,558.9 1071.8,557.0 1068.5,555.6 1064.9,554.8 1061.5,554.7 1058.3,555.3 1055.7,556.6 1053.7,558.5 1052.6,560.7 1052.4,563.3 1053.1,566.0 1054.7,568.7 1057.1,571.1 1060.1,573.1 1063.5,574.5 1067.1,575.3 1070.6,575.4 1073.8,574.7 1076.4,573.4 1078.4,571.5 1079.4,569.2 1079.6,566.6" fill="#baa10e" stroke="#baa10e" stroke-width="0.6" stroke-linejoin="round"/><polygon points="1072.4,564.4 1070.8,562.3 1068.2,560.6 1065.2,559.8 1062.4,560.1 1060.2,561.3 1059.2,563.2 1059.6,565.5 1061.2,567.7 1063.8,569.4 1066.8,570.1 1069.7,569.9 1071.8,568.7 1072.8,566.7" fill="#1a1a10" stroke="#1a1a10" stroke-width="0.6" stroke-linejoin="round"/><polygon points="1037.8,473.0 1036.3,470.8 1034.2,468.7 1031.5,467.0 1028.4,465.8 1025.1,465.1 1021.9,465.0 1018.9,465.5 1016.4,466.5 1014.5,468.1 1013.4,470.0 1013.1,472.2 1013.7,474.5 1015.1,476.8 1017.2,478.9 1020.0,480.6 1023.1,481.9 1026.4,482.6 1029.7,482.7 1032.7,482.2 1035.2,481.1 1037.1,479.6 1038.2,477.6 1038.4,475.4" fill="#baa10e" stroke="#baa10e" stroke-width="0.6" stroke-linejoin="round"/><polygon points="1031.8,473.4 1030.3,471.5 1028.0,470.1 1025.2,469.4 1022.5,469.6 1020.5,470.6 1019.5,472.2 1019.7,474.2 1021.2,476.1 1023.5,477.5 1026.3,478.2 1029.0,478.0 1031.1,477.0 1032.0,475.4" fill="#1a1a10" stroke="#1a1a10" stroke-width="0.6" stroke-linejoin="round"/><polygon points="1087.0,499.4 1085.5,497.0 1083.2,494.9 1080.4,493.1 1077.2,491.9 1073.9,491.1 1070.6,491.0 1067.6,491.5 1065.2,492.7 1063.3,494.3 1062.3,496.3 1062.1,498.6 1062.8,501.0 1064.3,503.4 1066.6,505.6 1069.4,507.4 1072.7,508.7 1076.0,509.4 1079.3,509.5 1082.3,509.0 1084.8,507.8 1086.6,506.2 1087.6,504.1 1087.8,501.8" fill="#baa10e" stroke="#baa10e" stroke-width="0.6" stroke-linejoin="round"/><polygon points="1081.0,499.8 1079.4,497.8 1077.0,496.3 1074.2,495.6 1071.5,495.8 1069.5,496.8 1068.5,498.6 1068.9,500.6 1070.4,502.6 1072.9,504.1 1075.7,504.8 1078.4,504.6 1080.4,503.5 1081.4,501.8" fill="#1a1a10" stroke="#1a1a10" stroke-width="0.6" stroke-linejoin="round"/><polygon points="1073.3,470.9 1071.8,468.6 1069.6,466.6 1066.8,464.9 1063.7,463.7 1060.5,463.0 1057.3,462.9 1054.4,463.3 1051.9,464.4 1050.1,465.9 1049.1,467.8 1048.9,470.0 1049.5,472.3 1051.0,474.6 1053.2,476.6 1055.9,478.4 1059.1,479.6 1062.4,480.3 1065.6,480.4 1068.6,479.9 1071.0,478.9 1072.8,477.3 1073.8,475.4 1073.9,473.2" fill="#baa10e" stroke="#baa10e" stroke-width="0.6" stroke-linejoin="round"/><polygon points="1067.3,471.2 1065.9,469.4 1063.5,467.9 1060.7,467.2 1058.1,467.4 1056.1,468.4 1055.2,470.0 1055.5,472.0 1057.0,473.8 1059.3,475.3 1062.1,476.0 1064.8,475.8 1066.8,474.8 1067.7,473.2" fill="#1a1a10" stroke="#1a1a10" stroke-width="0.6" stroke-linejoin="round"/><polygon points="1141.9,709.8 1140.0,706.6 1137.2,703.7 1133.8,701.3 1130.0,699.6 1126.1,698.8 1122.2,698.7 1118.8,699.6 1115.9,701.2 1113.9,703.6 1112.8,706.5 1112.7,709.8 1113.6,713.2 1115.5,716.4 1118.3,719.4 1121.7,721.8 1125.6,723.6 1129.6,724.5 1133.5,724.5 1137.0,723.6 1139.9,721.8 1141.9,719.4 1142.9,716.5 1143.0,713.2" fill="#baa10e" stroke="#baa10e" stroke-width="0.6" stroke-linejoin="round"/><polygon points="1134.9,710.6 1133.0,708.0 1130.0,706.0 1126.7,705.1 1123.5,705.4 1121.2,707.0 1120.2,709.4 1120.7,712.3 1122.6,715.0 1125.6,717.1 1129.0,718.0 1132.2,717.6 1134.5,716.0 1135.4,713.5" fill="#1a1a10" stroke="#1a1a10" stroke-width="0.6" stroke-linejoin="round"/><polygon points="1124.2,670.3 1122.3,667.3 1119.6,664.5 1116.3,662.3 1112.7,660.7 1108.8,659.8 1105.1,659.8 1101.7,660.6 1098.9,662.1 1096.9,664.3 1095.8,667.1 1095.7,670.1 1096.5,673.3 1098.4,676.4 1101.0,679.2 1104.3,681.5 1108.1,683.2 1112.0,684.0 1115.8,684.1 1119.2,683.2 1122.0,681.6 1124.0,679.4 1125.1,676.6 1125.1,673.5" fill="#baa10e" stroke="#baa10e" stroke-width="0.6" stroke-linejoin="round"/><polygon points="1117.3,671.1 1115.4,668.5 1112.6,666.6 1109.3,665.8 1106.3,666.1 1104.0,667.5 1103.0,669.9 1103.5,672.6 1105.3,675.1 1108.2,677.1 1111.5,677.9 1114.6,677.6 1116.8,676.1 1117.8,673.8" fill="#1a1a10" stroke="#1a1a10" stroke-width="0.6" stroke-linejoin="round"/><polygon points="1186.2,704.6 1184.1,701.4 1181.3,698.5 1177.9,696.2 1174.1,694.5 1170.2,693.7 1166.4,693.7 1163.0,694.5 1160.3,696.1 1158.3,698.5 1157.3,701.3 1157.4,704.5 1158.4,707.9 1160.4,711.1 1163.2,714.0 1166.7,716.4 1170.6,718.1 1174.5,719.0 1178.4,719.0 1181.8,718.1 1184.5,716.5 1186.4,714.1 1187.4,711.2 1187.3,707.9" fill="#baa10e" stroke="#baa10e" stroke-width="0.6" stroke-linejoin="round"/><polygon points="1179.3,705.4 1177.3,702.8 1174.3,700.8 1171.0,699.9 1167.9,700.3 1165.7,701.8 1164.8,704.2 1165.4,707.1 1167.4,709.7 1170.3,711.7 1173.7,712.6 1176.8,712.3 1179.0,710.7 1179.9,708.2" fill="#1a1a10" stroke="#1a1a10" stroke-width="0.6" stroke-linejoin="round"/><polygon points="1167.3,665.6 1165.4,662.6 1162.7,659.9 1159.4,657.7 1155.7,656.1 1151.9,655.3 1148.2,655.2 1144.9,656.0 1142.2,657.5 1140.3,659.7 1139.3,662.4 1139.3,665.4 1140.3,668.6 1142.2,671.7 1144.9,674.4 1148.2,676.7 1152.0,678.3 1155.8,679.2 1159.6,679.2 1162.9,678.4 1165.6,676.8 1167.5,674.6 1168.4,671.8 1168.4,668.8" fill="#baa10e" stroke="#baa10e" stroke-width="0.6" stroke-linejoin="round"/><polygon points="1160.6,666.4 1158.7,663.9 1155.8,662.0 1152.6,661.1 1149.6,661.5 1147.4,662.9 1146.5,665.2 1147.1,667.8 1149.0,670.4 1151.8,672.3 1155.1,673.1 1158.1,672.8 1160.3,671.3 1161.2,669.1" fill="#1a1a10" stroke="#1a1a10" stroke-width="0.6" stroke-linejoin="round"/><text transform="matrix(20.328,-1.572,-0.546,14.525,460.0,587.0)" font-size="1.64" text-anchor="middle" y="0.60" fill="#f2f2f2" stroke="#f2f2f2" stroke-width="0.045" style="font-family:'DejaVu Sans','Liberation Sans',sans-serif">K</text><text transform="matrix(19.664,-1.670,1.186,14.777,613.5,612.0)" font-size="1.64" text-anchor="middle" y="0.60" fill="#f2f2f2" stroke="#f2f2f2" stroke-width="0.045" style="font-family:'DejaVu Sans','Liberation Sans',sans-serif">K</text><text transform="matrix(20.835,-2.116,1.335,16.632,619.9,692.1)" font-size="1.64" text-anchor="middle" y="0.60" fill="#f2f2f2" stroke="#f2f2f2" stroke-width="0.045" style="font-family:'DejaVu Sans','Liberation Sans',sans-serif">K</text><text transform="matrix(23.003,-2.546,-0.697,18.549,453.7,754.7)" font-size="1.64" text-anchor="middle" y="0.60" fill="#f2f2f2" stroke="#f2f2f2" stroke-width="0.045" style="font-family:'DejaVu Sans','Liberation Sans',sans-serif">K</text><text transform="matrix(19.665,-1.508,0.311,14.169,536.3,577.9)" font-size="1.71" text-anchor="middle" y="0.62" fill="#f2f2f2" stroke="#f2f2f2" stroke-width="0.045" style="font-family:'DejaVu Sans','Liberation Sans',sans-serif">D1</text><text transform="matrix(19.025,-1.603,1.979,14.413,687.0,602.5)" font-size="1.71" text-anchor="middle" y="0.62" fill="#f2f2f2" stroke="#f2f2f2" stroke-width="0.045" style="font-family:'DejaVu Sans','Liberation Sans',sans-serif">D2</text><text transform="matrix(21.343,-1.983,-0.285,16.226,484.3,662.9)" font-size="1.71" text-anchor="middle" y="0.62" fill="#f2f2f2" stroke="#f2f2f2" stroke-width="0.045" style="font-family:'DejaVu Sans','Liberation Sans',sans-serif">R1</text><text transform="matrix(22.016,-2.234,-0.303,17.258,483.6,705.6)" font-size="1.71" text-anchor="middle" y="0.62" fill="#f2f2f2" stroke="#f2f2f2" stroke-width="0.045" style="font-family:'DejaVu Sans','Liberation Sans',sans-serif">R5</text><text transform="matrix(19.600,-1.821,2.105,15.332,692.6,643.5)" font-size="1.71" text-anchor="middle" y="0.62" fill="#f2f2f2" stroke="#f2f2f2" stroke-width="0.045" style="font-family:'DejaVu Sans','Liberation Sans',sans-serif">R2</text><text transform="matrix(22.158,-2.434,0.396,18.012,539.9,741.2)" font-size="1.71" text-anchor="middle" y="0.62" fill="#f2f2f2" stroke="#f2f2f2" stroke-width="0.045" style="font-family:'DejaVu Sans','Liberation Sans',sans-serif">D7</text><text transform="matrix(21.564,-1.805,-1.604,15.603,372.1,626.3)" font-size="1.71" text-anchor="middle" y="0.62" fill="#f2f2f2" stroke="#f2f2f2" stroke-width="0.045" style="font-family:'DejaVu Sans','Liberation Sans',sans-serif">J1</text><text transform="matrix(14.643,-0.710,4.080,10.102,959.3,418.1)" font-size="1.64" text-anchor="middle" y="0.60" fill="#f2f2f2" stroke="#f2f2f2" stroke-width="0.045" style="font-family:'DejaVu Sans','Liberation Sans',sans-serif">GND</text><text transform="matrix(13.653,-0.662,5.297,9.690,1114.7,410.6)" font-size="1.51" text-anchor="middle" y="0.55" fill="#f2f2f2" stroke="#f2f2f2" stroke-width="0.045" style="font-family:'DejaVu Sans','Liberation Sans',sans-serif">+3V3</text><text transform="matrix(-4.660,-12.049,16.005,-1.139,979.4,519.2)" font-size="1.51" text-anchor="middle" y="0.55" fill="#f2f2f2" stroke="#f2f2f2" stroke-width="0.045" style="font-family:'DejaVu Sans','Liberation Sans',sans-serif">R4</text><text transform="matrix(-5.666,-11.065,14.695,-0.955,1113.3,482.8)" font-size="1.58" text-anchor="middle" y="0.57" fill="#f2f2f2" stroke="#f2f2f2" stroke-width="0.045" style="font-family:'DejaVu Sans','Liberation Sans',sans-serif">C5</text><polygon points="1219.0,446.8 1203.2,421.4 1251.6,316.6 1270.0,341.8" fill="#131313" stroke="#131313" stroke-width="0.6" stroke-linejoin="round"/><polygon points="1219.0,446.8 1253.2,444.8 1307.0,340.6 1270.0,341.8" fill="#1c1c1c" stroke="#1c1c1c" stroke-width="0.6" stroke-linejoin="round"/><polygon points="1270.0,341.8 1307.0,340.6 1287.8,315.6 1251.6,316.6" fill="#262626" stroke="#262626" stroke-width="0.6" stroke-linejoin="round"/><polygon points="1275.0,334.5 1291.8,334.0 1283.1,322.6 1266.4,323.1" fill="#303030" stroke="#303030" stroke-width="0.6" stroke-linejoin="round"/><polygon points="1266.4,323.1 1283.1,322.6 1277.9,332.1 1269.3,332.4" fill="#3a3a3a" stroke="#3a3a3a" stroke-width="0.6" stroke-linejoin="round"/><polygon points="1291.8,334.0 1283.1,322.6 1277.9,332.1 1282.3,338.0" fill="#2c2c2c" stroke="#2c2c2c" stroke-width="0.6" stroke-linejoin="round"/><polygon points="1273.7,338.3 1282.3,338.0 1277.9,332.1 1269.3,332.4" fill="#151515" stroke="#151515" stroke-width="0.6" stroke-linejoin="round"/><polygon points="1148.9,450.9 1134.4,425.0 1177.1,318.7 1194.0,344.4" fill="#131313" stroke="#131313" stroke-width="0.6" stroke-linejoin="round"/><polygon points="1148.9,450.9 1184.2,448.8 1232.4,343.1 1194.0,344.4" fill="#1c1c1c" stroke="#1c1c1c" stroke-width="0.6" stroke-linejoin="round"/><polygon points="1194.0,344.4 1232.4,343.1 1214.7,317.6 1177.1,318.7" fill="#262626" stroke="#262626" stroke-width="0.6" stroke-linejoin="round"/><polygon points="1199.8,337.0 1217.2,336.4 1209.2,324.7 1191.9,325.2" fill="#303030" stroke="#303030" stroke-width="0.6" stroke-linejoin="round"/><polygon points="1191.9,325.2 1209.2,324.7 1204.0,334.4 1195.1,334.7" fill="#3a3a3a" stroke="#3a3a3a" stroke-width="0.6" stroke-linejoin="round"/><polygon points="1217.2,336.4 1209.2,324.7 1204.0,334.4 1208.1,340.5" fill="#2c2c2c" stroke="#2c2c2c" stroke-width="0.6" stroke-linejoin="round"/><polygon points="1199.2,340.8 1208.1,340.5 1204.0,334.4 1195.1,334.7" fill="#151515" stroke="#151515" stroke-width="0.6" stroke-linejoin="round"/><polygon points="963.0,461.7 952.4,434.5 979.0,324.2 991.5,351.3" fill="#131313" stroke="#131313" stroke-width="0.6" stroke-linejoin="round"/><polygon points="963.0,461.7 1039.3,457.3 1074.7,348.5 991.5,351.3" fill="#1c1c1c" stroke="#1c1c1c" stroke-width="0.6" stroke-linejoin="round"/><polygon points="991.5,351.3 1074.7,348.5 1060.4,321.9 979.0,324.2" fill="#262626" stroke="#262626" stroke-width="0.6" stroke-linejoin="round"/><polygon points="999.4,343.4 1018.5,342.8 1012.5,330.5 993.6,331.1" fill="#303030" stroke="#303030" stroke-width="0.6" stroke-linejoin="round"/><polygon points="993.6,331.1 1012.5,330.5 1007.5,340.7 997.7,341.0" fill="#3a3a3a" stroke="#3a3a3a" stroke-width="0.6" stroke-linejoin="round"/><polygon points="1018.5,342.8 1012.5,330.5 1007.5,340.7 1010.5,347.0" fill="#2c2c2c" stroke="#2c2c2c" stroke-width="0.6" stroke-linejoin="round"/><polygon points="1000.7,347.3 1010.5,347.0 1007.5,340.7 997.7,341.0" fill="#151515" stroke="#151515" stroke-width="0.6" stroke-linejoin="round"/><polygon points="1041.0,342.1 1059.7,341.5 1053.3,329.3 1034.7,329.9" fill="#303030" stroke="#303030" stroke-width="0.6" stroke-linejoin="round"/><polygon points="1034.7,329.9 1053.3,329.3 1048.2,339.4 1038.7,339.7" fill="#3a3a3a" stroke="#3a3a3a" stroke-width="0.6" stroke-linejoin="round"/><polygon points="1059.7,341.5 1053.3,329.3 1048.2,339.4 1051.5,345.7" fill="#2c2c2c" stroke="#2c2c2c" stroke-width="0.6" stroke-linejoin="round"/><polygon points="1041.9,346.0 1051.5,345.7 1048.2,339.4 1038.7,339.7" fill="#151515" stroke="#151515" stroke-width="0.6" stroke-linejoin="round"/><polygon points="1161.6,478.2 1162.0,474.0 1163.2,470.1 1170.0,454.7 1172.0,451.1 1174.8,448.0 1178.3,445.2 1182.4,443.0 1184.2,442.1 1188.8,440.5 1193.8,439.4 1199.3,438.8 1205.1,438.7 1211.1,439.2 1217.2,440.3 1223.4,441.8 1229.5,443.9 1235.5,446.4 1241.2,449.4 1246.6,452.8 1251.5,456.4 1255.9,460.4 1259.8,464.6 1263.0,468.9 1265.4,473.3 1267.1,477.8 1267.6,479.7 1268.6,484.2 1268.6,488.5 1267.8,492.6 1266.2,496.4 1257.8,511.6 1255.3,515.1 1252.0,518.1 1247.9,520.6 1246.4,521.3 1241.8,523.2 1236.6,524.6 1231.0,525.4 1224.9,525.5 1218.6,525.0 1212.1,523.9 1205.6,522.2 1199.2,520.0 1193.0,517.2 1187.1,513.9 1181.6,510.3 1176.7,506.3 1172.4,502.1 1168.7,497.7 1165.8,493.2 1163.8,488.6 1162.5,484.2 1162.1,482.7" fill="url(#gecapf)"/><polygon points="1174.0,456.2 1174.3,452.2 1175.4,448.4 1200.6,391.3 1202.5,388.0 1205.2,385.0 1208.6,382.4 1212.7,380.3 1217.4,378.8 1222.7,377.7 1228.3,377.2 1234.3,377.2 1240.6,377.8 1247.0,378.9 1253.5,380.5 1259.9,382.6 1266.1,385.1 1272.2,388.1 1277.9,391.5 1283.1,395.2 1287.8,399.1 1292.0,403.3 1295.4,407.6 1298.1,411.9 1300.1,416.3 1301.1,420.6 1301.3,424.7 1300.7,428.6 1299.1,432.3 1267.8,488.4 1265.4,491.7 1262.3,494.5 1258.4,496.9 1254.3,498.6 1250.0,500.4 1245.2,501.6 1239.9,502.3 1234.3,502.4 1228.4,501.9 1222.3,500.9 1216.2,499.3 1210.2,497.2 1204.4,494.7 1198.9,491.7 1193.8,488.4 1189.1,484.7 1185.0,480.8 1181.6,476.7 1178.9,472.6 1176.8,468.4 1175.6,464.3 1174.5,460.4" fill="url(#gecap)"/><polyline points="1176.6,452.1 1176.0,453.4 1175.6,454.8 1175.3,456.2 1175.1,457.6 1175.0,459.1 1175.0,460.6 1175.2,462.2 1175.5,463.8 1175.9,465.4 1176.4,467.0 1177.0,468.6 1177.7,470.2 1178.6,471.8 1179.5,473.5 1180.6,475.1 1181.8,476.7 1183.0,478.3 1184.4,479.9 1185.9,481.4 1187.5,482.9 1189.1,484.4 1190.9,485.9 1192.7,487.3 1194.6,488.7 1196.6,490.0 1198.6,491.3 1200.7,492.5 1202.9,493.7 1205.1,494.8 1207.3,495.8 1209.6,496.8 1212.0,497.7 1214.3,498.5 1216.7,499.2 1219.0,499.9 1221.4,500.5 1223.8,501.0 1226.2,501.4 1228.5,501.8 1230.8,502.0 1233.1,502.2 1235.4,502.3 1237.6,502.3 1239.8,502.2 1241.9,502.0 1244.0,501.7 1246.0,501.4 1247.9,500.9 1249.8,500.4 1251.5,499.8 1253.2,499.1 1254.8,498.4 1256.3,497.6 1257.7,496.7 1259.0,495.7 1260.2,494.7 1261.3,493.6 1262.3,492.4 1263.2,491.2 1263.9,489.9" fill="none" stroke="#0e2c5e" stroke-width="3" opacity="0.85"/><polygon points="1197.2,398.6 1197.4,394.5 1198.6,390.6 1200.0,387.3 1202.0,383.8 1204.8,380.6 1208.4,378.0 1212.7,375.9 1217.6,374.2 1223.0,373.1 1228.9,372.6 1235.2,372.6 1241.7,373.2 1248.4,374.4 1255.2,376.1 1261.9,378.2 1268.4,380.9 1274.7,384.0 1280.7,387.5 1286.2,391.3 1291.1,395.4 1295.4,399.7 1299.0,404.2 1301.9,408.8 1303.9,413.3 1305.0,417.8 1305.3,422.1 1304.6,426.2 1303.0,430.0 1301.2,433.2 1298.6,436.6 1295.2,439.6 1291.0,442.1 1287.6,443.4 1282.9,445.2 1277.5,446.5 1271.7,447.2 1265.4,447.2 1258.8,446.7 1252.0,445.5 1245.2,443.8 1238.4,441.5 1231.8,438.7 1225.6,435.5 1219.8,431.9 1214.5,427.9 1209.9,423.8 1205.9,419.4 1202.8,415.0 1200.4,410.6 1198.9,406.2 1197.9,403.0" fill="url(#gecapt)"/><polygon points="1287.0,402.9 1284.4,399.7 1281.3,396.5 1277.7,393.5 1273.7,390.8 1269.4,388.2 1264.8,386.0 1260.1,384.0 1255.2,382.4 1250.3,381.2 1245.4,380.4 1240.7,379.9 1236.1,379.9 1231.8,380.3 1227.9,381.1 1224.4,382.3 1221.3,383.9 1218.7,385.8 1216.7,388.1 1215.3,390.6 1214.6,393.4 1214.4,396.5 1215.0,399.6 1216.2,402.9 1218.0,406.2 1220.4,409.6 1223.4,412.8 1227.0,415.9 1231.0,418.9 1235.4,421.6 1240.1,424.0 1245.1,426.1 1250.2,427.8 1255.3,429.1 1260.4,429.9 1265.4,430.4 1270.2,430.3 1274.6,429.9 1278.6,428.9 1282.2,427.6 1285.2,425.9 1287.7,423.8 1289.5,421.4 1290.7,418.7 1291.3,415.7 1291.2,412.7 1290.4,409.4 1289.0,406.2" fill="#ece9e2" stroke="#ece9e2" stroke-width="0.6" stroke-linejoin="round"/><line x1="1218.0" y1="406.2" x2="1287.0" y2="402.9" stroke="#3a3a36" stroke-width="0.9"/><line x1="1270.2" y1="430.3" x2="1236.1" y2="379.9" stroke="#3a3a36" stroke-width="0.9"/><path d="M1060.6,473.9 L1066.4,457.5" fill="none" stroke="#959595" stroke-width="7.5" stroke-linecap="round" stroke-linejoin="round"/><path d="M1059.7,472.4 L1065.5,456.0" fill="none" stroke="#d2d2d2" stroke-width="5.4" stroke-linecap="round" stroke-linejoin="round"/><path d="M1059.3,471.7 L1065.0,455.2" fill="none" stroke="#e6e6e6" stroke-width="2.7" stroke-linecap="round" stroke-linejoin="round"/><path d="M1074.1,502.5 L1080.2,486.1" fill="none" stroke="#959595" stroke-width="7.6" stroke-linecap="round" stroke-linejoin="round"/><path d="M1073.2,501.0 L1079.3,484.6" fill="none" stroke="#d2d2d2" stroke-width="5.5" stroke-linecap="round" stroke-linejoin="round"/><path d="M1072.7,500.2 L1078.8,483.8" fill="none" stroke="#e6e6e6" stroke-width="2.8" stroke-linecap="round" stroke-linejoin="round"/><polygon points="1065.6,447.6 1066.2,440.8 1067.5,435.0 1069.7,430.7 1072.4,428.1 1075.6,427.4 1079.0,428.8 1086.4,431.9 1090.1,435.3 1092.7,437.8 1094.9,440.8 1096.9,444.0 1098.0,446.4 1099.4,449.6 1100.4,453.4 1101.0,457.3 1101.2,461.1 1100.8,464.7 1100.5,466.9 1099.5,470.6 1098.2,473.6 1096.5,476.8 1093.9,480.5 1091.3,482.5 1084.6,486.7 1081.3,487.0 1077.9,485.2 1074.5,481.6 1071.5,476.4 1068.9,469.9 1067.0,462.7 1065.9,455.1" fill="url(#g2)"/><polygon points="1056.2,453.2 1056.4,449.8 1057.8,444.0 1059.1,441.1 1060.7,437.8 1063.3,434.3 1065.7,432.1 1072.4,428.1 1075.6,427.4 1079.0,428.8 1082.5,432.1 1085.7,437.2 1088.4,443.8 1090.4,451.4 1091.7,459.4 1092.0,467.2 1091.3,474.3 1089.8,480.2 1087.5,484.4 1084.6,486.7 1081.3,487.0 1073.5,483.7 1070.5,482.2 1066.8,478.9 1064.4,476.2 1062.2,473.4 1060.3,470.1 1059.1,467.8 1057.8,464.6 1056.9,460.9 1056.3,457.0" fill="url(#g1)"/><path d="M1024.6,477.3 L1026.7,470.9 L1027.4,469.3 L1028.2,468.2 L1029.2,467.8 L1030.1,468.1 L1031.1,469.0 L1032.0,470.5 L1039.1,486.5" fill="none" stroke="#959595" stroke-width="6.5" stroke-linecap="round" stroke-linejoin="round"/><path d="M1023.9,476.0 L1025.9,469.6 L1026.6,468.0 L1027.4,466.9 L1028.4,466.5 L1029.4,466.8 L1030.3,467.7 L1031.2,469.2 L1038.4,485.2" fill="none" stroke="#d2d2d2" stroke-width="4.7" stroke-linecap="round" stroke-linejoin="round"/><path d="M1023.5,475.3 L1025.5,468.9 L1026.2,467.3 L1027.0,466.3 L1028.0,465.9 L1029.0,466.1 L1029.9,467.0 L1030.8,468.5 L1038.0,484.6" fill="none" stroke="#e6e6e6" stroke-width="2.3" stroke-linecap="round" stroke-linejoin="round"/><path d="M1064.7,568.4 L1067.1,562.1 L1067.7,560.0 L1068.0,557.6 L1068.0,554.9 L1067.7,552.2 L1067.2,549.6 L1066.4,547.4 L1058.4,529.6" fill="none" stroke="#959595" stroke-width="7.0" stroke-linecap="round" stroke-linejoin="round"/><path d="M1063.8,567.0 L1066.3,560.7 L1066.9,558.6 L1067.2,556.2 L1067.2,553.5 L1066.9,550.8 L1066.4,548.2 L1065.6,546.0 L1057.6,528.2" fill="none" stroke="#d2d2d2" stroke-width="5.0" stroke-linecap="round" stroke-linejoin="round"/><path d="M1063.4,566.3 L1065.9,560.0 L1066.5,557.9 L1066.8,555.5 L1066.8,552.8 L1066.5,550.1 L1065.9,547.5 L1065.1,545.3 L1057.2,527.5" fill="none" stroke="#e6e6e6" stroke-width="2.5" stroke-linecap="round" stroke-linejoin="round"/><polygon points="1027.9,493.6 1028.2,490.7 1028.8,488.5 1030.2,485.9 1032.5,483.4 1035.5,481.4 1039.0,480.0 1042.5,479.4 1045.8,479.6 1048.4,480.6 1050.6,481.7 1052.6,483.6 1055.9,490.8 1069.2,519.7 1070.0,522.3 1069.5,525.1 1069.0,527.5 1067.5,530.1 1065.1,532.5 1061.9,534.5 1058.4,535.9 1054.8,536.5 1051.5,536.4 1048.8,535.5 1046.6,534.2 1044.6,532.4 1041.3,524.9 1028.8,496.1" fill="url(#g3)"/><polyline points="1056.1,491.6 1055.0,490.2 1053.6,489.2 1051.7,488.4 1049.6,488.1 1047.3,488.0 1044.8,488.4 1042.3,489.1 1039.8,490.1 1037.6,491.4 1035.5,492.9 1033.9,494.6 1032.6,496.4 1031.7,498.3 1031.4,500.1 1031.5,501.8" fill="none" stroke="#c39a62" stroke-width="0.9" opacity="0.5"/><polyline points="1065.5,512.2 1064.5,510.9 1063.1,509.8 1061.2,509.1 1059.1,508.7 1056.7,508.7 1054.2,509.1 1051.6,509.8 1049.1,510.8 1046.8,512.1 1044.7,513.7 1043.0,515.4 1041.7,517.2 1040.8,519.0 1040.4,520.8 1040.5,522.5" fill="none" stroke="#c39a62" stroke-width="0.9" opacity="0.5"/><path d="M986.2,479.7 L988.0,473.2 L988.6,471.6 L989.4,470.6 L990.2,470.2 L991.2,470.4 L992.0,471.3 L992.8,472.9 L999.5,489.1" fill="none" stroke="#959595" stroke-width="6.6" stroke-linecap="round" stroke-linejoin="round"/><path d="M985.4,478.4 L987.2,471.9 L987.8,470.3 L988.6,469.2 L989.5,468.8 L990.4,469.1 L991.2,470.0 L992.0,471.5 L998.8,487.8" fill="none" stroke="#d2d2d2" stroke-width="4.8" stroke-linecap="round" stroke-linejoin="round"/><path d="M985.0,477.7 L986.8,471.2 L987.4,469.6 L988.2,468.6 L989.1,468.2 L990.0,468.4 L990.8,469.4 L991.6,470.9 L998.4,487.1" fill="none" stroke="#e6e6e6" stroke-width="2.4" stroke-linecap="round" stroke-linejoin="round"/><path d="M1023.6,571.9 L1025.8,565.5 L1026.3,563.4 L1026.6,560.9 L1026.6,558.2 L1026.3,555.5 L1025.7,552.9 L1025.0,550.6 L1017.6,532.7" fill="none" stroke="#959595" stroke-width="7.1" stroke-linecap="round" stroke-linejoin="round"/><path d="M1022.7,570.4 L1024.9,564.1 L1025.4,562.0 L1025.7,559.5 L1025.7,556.8 L1025.4,554.1 L1024.9,551.5 L1024.1,549.2 L1016.7,531.3" fill="none" stroke="#d2d2d2" stroke-width="5.1" stroke-linecap="round" stroke-linejoin="round"/><path d="M1022.3,569.7 L1024.5,563.4 L1025.0,561.3 L1025.3,558.8 L1025.3,556.1 L1025.0,553.4 L1024.5,550.8 L1023.7,548.5 L1016.3,530.6" fill="none" stroke="#e6e6e6" stroke-width="2.6" stroke-linecap="round" stroke-linejoin="round"/><polygon points="988.1,496.2 988.3,493.3 989.0,491.1 990.3,488.4 992.5,486.0 995.6,483.9 999.0,482.5 1002.6,481.9 1005.9,482.1 1008.7,483.1 1010.7,484.2 1012.9,486.2 1016.0,493.4 1028.4,522.7 1029.4,525.2 1029.0,528.1 1028.4,530.5 1027.0,533.1 1024.6,535.5 1021.5,537.5 1017.9,539.0 1014.3,539.6 1010.9,539.5 1008.1,538.6 1006.0,537.3 1003.8,535.4 1002.8,532.9 999.7,525.3" fill="url(#g4)"/><polyline points="1016.1,494.2 1015.0,492.9 1013.5,491.8 1011.6,491.1 1009.4,490.7 1007.0,490.7 1004.5,491.0 1002.0,491.7 999.5,492.7 997.3,494.0 995.3,495.6 993.6,497.3 992.4,499.1 991.6,501.0 991.3,502.8 991.5,504.5" fill="none" stroke="#c39a62" stroke-width="0.9" opacity="0.5"/><polyline points="1025.0,515.1 1023.9,513.7 1022.4,512.7 1020.5,512.0 1018.2,511.6 1015.8,511.6 1013.2,512.0 1010.7,512.7 1008.2,513.7 1005.9,515.0 1003.8,516.6 1002.1,518.3 1000.8,520.1 1000.0,522.0 999.7,523.8 999.9,525.5" fill="none" stroke="#c39a62" stroke-width="0.9" opacity="0.5"/><path d="M945.0,481.1 L949.1,464.4" fill="none" stroke="#959595" stroke-width="7.9" stroke-linecap="round" stroke-linejoin="round"/><path d="M944.0,479.5 L948.1,462.8" fill="none" stroke="#d2d2d2" stroke-width="5.7" stroke-linecap="round" stroke-linejoin="round"/><path d="M943.5,478.7 L947.6,462.0" fill="none" stroke="#e6e6e6" stroke-width="2.8" stroke-linecap="round" stroke-linejoin="round"/><path d="M955.9,510.6 L960.3,493.9" fill="none" stroke="#959595" stroke-width="8.1" stroke-linecap="round" stroke-linejoin="round"/><path d="M954.9,509.0 L959.3,492.3" fill="none" stroke="#d2d2d2" stroke-width="5.8" stroke-linecap="round" stroke-linejoin="round"/><path d="M954.4,508.2 L958.8,491.5" fill="none" stroke="#e6e6e6" stroke-width="2.9" stroke-linecap="round" stroke-linejoin="round"/><polygon points="948.3,454.2 948.5,447.2 949.5,441.3 951.0,436.9 953.1,434.3 955.5,433.6 963.8,437.0 966.1,438.3 970.1,441.8 972.9,445.2 974.7,447.4 976.5,450.5 977.8,453.2 978.6,455.6 979.5,458.1 980.1,461.0 980.6,464.0 980.7,467.0 980.6,469.7 980.3,472.0 979.8,474.9 978.8,478.1 977.8,480.8 975.9,484.4 972.9,488.2 970.9,490.3 963.7,494.6 961.1,494.8 958.5,493.0 955.8,489.2 953.4,483.8 951.3,477.1 949.7,469.7 948.6,461.9" fill="url(#g6)"/><polygon points="936.2,461.5 936.4,458.8 936.7,456.6 937.2,453.6 937.9,451.4 939.2,447.9 941.1,444.3 942.6,442.3 945.9,438.4 953.1,434.3 955.5,433.6 958.2,435.1 960.9,438.6 963.5,443.9 965.7,450.7 967.5,458.4 968.6,466.7 969.0,474.7 968.6,482.0 967.5,488.0 965.9,492.3 963.7,494.6 961.1,494.8 952.9,491.5 950.6,489.9 946.6,486.6 943.8,483.1 942.1,480.8 940.3,477.8 939.1,475.1 938.2,472.7 937.4,470.2 936.8,467.4 936.4,464.4" fill="url(#g5)"/><path d="M1152.7,669.3 L1161.0,653.6" fill="none" stroke="#959595" stroke-width="8.6" stroke-linecap="round" stroke-linejoin="round"/><path d="M1151.6,667.6 L1160.0,651.9" fill="none" stroke="#d2d2d2" stroke-width="6.2" stroke-linecap="round" stroke-linejoin="round"/><path d="M1151.1,666.7 L1159.5,651.0" fill="none" stroke="#e6e6e6" stroke-width="3.1" stroke-linecap="round" stroke-linejoin="round"/><path d="M1171.1,708.4 L1180.0,693.0" fill="none" stroke="#959595" stroke-width="8.8" stroke-linecap="round" stroke-linejoin="round"/><path d="M1170.0,706.6 L1179.0,691.2" fill="none" stroke="#d2d2d2" stroke-width="6.3" stroke-linecap="round" stroke-linejoin="round"/><path d="M1169.5,705.8 L1178.5,690.3" fill="none" stroke="#e6e6e6" stroke-width="3.2" stroke-linecap="round" stroke-linejoin="round"/><polygon points="1160.1,642.1 1161.0,634.6 1163.1,628.7 1166.1,624.8 1170.1,623.2 1174.6,624.0 1183.6,627.5 1187.9,630.3 1192.0,633.9 1195.7,638.0 1198.0,641.0 1200.8,645.6 1201.7,647.8 1203.6,652.1 1205.0,656.9 1205.8,661.6 1205.9,663.0 1206.0,668.6 1205.4,673.4 1204.6,677.0 1202.8,681.5 1200.5,686.0 1197.5,689.2 1190.4,694.7 1186.3,695.9 1181.6,694.5 1176.8,690.8 1172.1,685.0 1167.9,677.5 1164.4,668.9 1161.9,659.8 1160.4,650.7" fill="url(#g8)"/><polygon points="1150.9,652.4 1151.0,650.0 1151.5,645.3 1152.5,641.9 1154.0,637.5 1156.5,633.3 1159.1,629.9 1166.1,624.8 1170.1,623.2 1174.6,624.0 1179.4,627.2 1184.2,632.6 1188.7,640.1 1192.5,648.9 1195.3,658.5 1196.9,668.2 1197.2,677.3 1196.1,685.1 1193.8,691.0 1190.4,694.7 1186.3,695.9 1181.6,694.5 1172.6,691.0 1168.4,687.8 1164.2,684.3 1161.3,680.7 1158.4,677.1 1155.8,672.5 1154.8,670.4 1153.0,666.1 1151.8,661.4 1151.0,656.8" fill="url(#g7)"/><path d="M1109.3,674.0 L1117.0,658.2" fill="none" stroke="#959595" stroke-width="8.8" stroke-linecap="round" stroke-linejoin="round"/><path d="M1108.3,672.3 L1116.0,656.5" fill="none" stroke="#d2d2d2" stroke-width="6.3" stroke-linecap="round" stroke-linejoin="round"/><path d="M1107.7,671.4 L1115.4,655.6" fill="none" stroke="#e6e6e6" stroke-width="3.2" stroke-linecap="round" stroke-linejoin="round"/><path d="M1126.7,713.7 L1134.9,698.1" fill="none" stroke="#959595" stroke-width="9.0" stroke-linecap="round" stroke-linejoin="round"/><path d="M1125.6,711.9 L1133.8,696.3" fill="none" stroke="#d2d2d2" stroke-width="6.5" stroke-linecap="round" stroke-linejoin="round"/><path d="M1125.0,711.0 L1133.3,695.4" fill="none" stroke="#e6e6e6" stroke-width="3.2" stroke-linecap="round" stroke-linejoin="round"/><polygon points="1116.1,646.6 1116.9,639.1 1118.7,633.1 1121.6,629.2 1125.2,627.6 1129.4,628.4 1138.6,632.0 1142.6,634.9 1146.8,638.5 1150.3,642.7 1152.7,645.7 1155.4,650.4 1156.5,652.5 1158.2,657.0 1159.6,661.8 1160.3,666.6 1160.5,671.1 1160.4,673.6 1159.8,678.5 1158.8,682.2 1157.2,686.6 1154.7,691.2 1152.0,694.4 1144.6,700.0 1140.7,701.1 1136.4,699.7 1131.8,695.9 1127.5,690.0 1123.5,682.4 1120.2,673.8 1117.8,664.5 1116.4,655.3" fill="url(#g10)"/><polygon points="1105.9,657.1 1106.3,653.3 1106.7,649.9 1107.8,646.2 1109.2,642.0 1111.8,637.8 1114.3,634.4 1121.6,629.2 1125.2,627.6 1129.4,628.4 1133.9,631.7 1138.4,637.3 1142.6,644.8 1146.2,653.8 1148.9,663.5 1150.4,673.3 1150.7,682.5 1149.8,690.4 1147.7,696.4 1144.6,700.0 1140.7,701.1 1136.4,699.7 1127.2,696.2 1122.3,692.3 1119.0,689.4 1115.9,685.8 1113.3,682.1 1111.5,679.1 1109.6,675.4 1108.0,671.0 1106.8,666.2 1106.0,661.5" fill="url(#g9)"/><polygon points="937.2,740.5 946.9,739.3 952.1,723.5 942.2,724.7" fill="#4a4a4a" stroke="#4a4a4a" stroke-width="0.6" stroke-linejoin="round"/><polygon points="985.9,734.7 995.4,733.6 1001.4,717.8 991.8,718.9" fill="#4a4a4a" stroke="#4a4a4a" stroke-width="0.6" stroke-linejoin="round"/><polygon points="1033.6,729.0 1042.9,727.9 1049.8,712.2 1040.3,713.3" fill="#4a4a4a" stroke="#4a4a4a" stroke-width="0.6" stroke-linejoin="round"/><polygon points="1080.3,723.4 1089.4,722.4 1097.0,706.7 1087.8,707.8" fill="#4a4a4a" stroke="#4a4a4a" stroke-width="0.6" stroke-linejoin="round"/><polygon points="918.9,747.9 1109.9,724.9 1120.0,714.5 925.0,737.6" fill="#10180f" opacity="0.35" stroke="#10180f" stroke-width="0.6" stroke-linejoin="round"/><polygon points="896.1,608.3 939.2,604.4 934.7,620.9 1030.9,611.9 1034.3,603.0 1075.4,599.2 1071.7,608.2 1073.9,608.0 1088.1,573.8 900.2,589.8" fill="#191919" stroke="#191919" stroke-width="0.6" stroke-linejoin="round"/><polygon points="1052.9,683.7 1027.9,620.2 1034.3,603.0 1060.1,666.9" fill="#0e0e0e" stroke="#0e0e0e" stroke-width="0.6" stroke-linejoin="round"/><polygon points="926.6,742.9 879.9,581.9 887.1,546.5 900.2,589.8 896.1,608.3 915.9,675.2 920.7,657.1 936.7,709.6" fill="#141414" stroke="#141414" stroke-width="0.6" stroke-linejoin="round"/><polygon points="926.6,742.9 1122.2,719.5 1139.6,686.7 936.7,709.6" fill="#1c1c1c" stroke="#1c1c1c" stroke-width="0.6" stroke-linejoin="round"/><polygon points="915.9,675.2 961.0,670.5 939.2,604.4 896.1,608.3" fill="#2b2b2b" stroke="#2b2b2b" stroke-width="0.6" stroke-linejoin="round"/><polygon points="1060.1,666.9 1103.0,662.4 1075.4,599.2 1034.3,603.0" fill="#2b2b2b" stroke="#2b2b2b" stroke-width="0.6" stroke-linejoin="round"/><polygon points="900.2,589.8 1088.1,573.8 1069.4,532.7 887.1,546.5" fill="#282828" stroke="#282828" stroke-width="0.6" stroke-linejoin="round"/><polygon points="936.7,709.6 1139.6,686.7 1117.1,637.4 920.7,657.1" fill="#282828" stroke="#282828" stroke-width="0.6" stroke-linejoin="round"/><polygon points="933.9,561.5 932.5,558.6 930.3,555.9 927.4,553.5 923.9,551.6 920.1,550.3 916.2,549.6 912.2,549.6 908.5,550.2 905.1,551.4 902.4,553.3 900.3,555.6 899.0,558.3 898.6,561.3 899.1,564.3 900.4,567.3 902.6,570.1 905.5,572.5 909.0,574.4 912.9,575.8 916.9,576.5 921.0,576.5 924.8,575.9 928.1,574.6 930.9,572.6 933.0,570.3 934.2,567.5 934.5,564.5" fill="#f3f3f1" stroke="#f3f3f1" stroke-width="0.6" stroke-linejoin="round"/><polygon points="931.5,561.7 930.3,559.2 928.4,556.8 925.9,554.8 922.9,553.2 919.6,552.0 916.2,551.4 912.8,551.4 909.6,551.9 906.7,553.0 904.3,554.6 902.5,556.6 901.4,558.9 901.1,561.5 901.5,564.1 902.7,566.7 904.6,569.1 907.1,571.1 910.1,572.8 913.4,574.0 916.9,574.6 920.3,574.6 923.6,574.0 926.5,572.9 928.9,571.3 930.7,569.2 931.7,566.9 932.0,564.3" fill="url(#g11)"/><polygon points="920.5,569.6 919.3,567.7 917.3,566.3 914.8,565.7 912.3,565.9 910.3,566.9 909.2,568.5 909.3,570.5 910.4,572.3 912.5,573.7 915.0,574.4 917.5,574.2 919.5,573.1 920.5,571.5" fill="#8f8f8c" stroke="#8f8f8c" stroke-width="0.6" stroke-linejoin="round"/><polygon points="917.8,568.5 916.9,567.1 915.2,566.2 913.2,566.0 911.4,566.5 910.4,567.7 910.4,569.1 911.3,570.6 913.0,571.5 915.0,571.7 916.8,571.2 917.8,570.0" fill="#b4b4b0" stroke="#b4b4b0" stroke-width="0.6" stroke-linejoin="round"/><polygon points="980.7,557.8 979.1,554.9 976.9,552.2 973.9,549.9 970.5,548.0 966.7,546.7 962.8,546.0 958.9,546.0 955.2,546.6 952.0,547.8 949.3,549.6 947.4,551.9 946.2,554.6 945.9,557.5 946.5,560.5 948.0,563.5 950.3,566.2 953.2,568.6 956.7,570.5 960.6,571.9 964.6,572.6 968.5,572.6 972.2,571.9 975.5,570.6 978.2,568.8 980.1,566.4 981.2,563.7 981.4,560.8" fill="#f3f3f1" stroke="#f3f3f1" stroke-width="0.6" stroke-linejoin="round"/><polygon points="978.3,558.0 977.0,555.5 975.0,553.2 972.5,551.2 969.5,549.5 966.3,548.4 962.9,547.8 959.6,547.8 956.4,548.3 953.6,549.4 951.3,551.0 949.6,552.9 948.7,555.2 948.4,557.7 948.9,560.3 950.2,562.9 952.2,565.2 954.7,567.3 957.7,568.9 961.0,570.1 964.5,570.7 967.9,570.7 971.0,570.1 973.8,569.0 976.1,567.4 977.8,565.4 978.7,563.1 978.9,560.5" fill="url(#g12)"/><polygon points="967.1,565.8 965.9,563.9 963.9,562.6 961.4,561.9 959.0,562.1 957.1,563.1 956.1,564.7 956.2,566.6 957.4,568.5 959.5,569.8 962.0,570.5 964.4,570.3 966.3,569.3 967.3,567.7" fill="#8f8f8c" stroke="#8f8f8c" stroke-width="0.6" stroke-linejoin="round"/><polygon points="964.6,564.8 963.6,563.4 961.9,562.4 959.9,562.2 958.2,562.7 957.2,563.9 957.3,565.3 958.3,566.7 960.0,567.7 961.9,567.9 963.6,567.4 964.6,566.2" fill="#b4b4b0" stroke="#b4b4b0" stroke-width="0.6" stroke-linejoin="round"/><polygon points="1026.5,554.1 1024.9,551.3 1022.5,548.6 1019.5,546.3 1016.1,544.5 1012.3,543.2 1008.4,542.5 1004.6,542.5 1001.1,543.1 997.9,544.3 995.4,546.1 993.5,548.3 992.5,551.0 992.3,553.8 993.0,556.8 994.6,559.7 996.9,562.4 999.9,564.8 1003.4,566.7 1007.3,568.0 1011.2,568.7 1015.1,568.7 1018.7,568.1 1021.9,566.8 1024.4,565.0 1026.2,562.6 1027.2,560.0 1027.3,557.1" fill="#f3f3f1" stroke="#f3f3f1" stroke-width="0.6" stroke-linejoin="round"/><polygon points="1024.2,554.3 1022.8,551.8 1020.7,549.6 1018.2,547.6 1015.2,546.0 1012.0,544.9 1008.6,544.3 1005.3,544.3 1002.3,544.8 999.6,545.8 997.4,547.4 995.8,549.3 994.9,551.6 994.8,554.1 995.4,556.6 996.7,559.1 998.7,561.4 1001.3,563.5 1004.3,565.1 1007.6,566.2 1011.0,566.8 1014.4,566.9 1017.5,566.3 1020.2,565.2 1022.4,563.6 1023.9,561.6 1024.8,559.3 1024.8,556.9" fill="url(#g13)"/><polygon points="1012.9,562.0 1011.6,560.2 1009.5,558.9 1007.1,558.3 1004.7,558.5 1002.9,559.4 1002.0,561.0 1002.1,562.9 1003.4,564.7 1005.5,566.1 1008.0,566.7 1010.3,566.5 1012.2,565.5 1013.1,563.9" fill="#8f8f8c" stroke="#8f8f8c" stroke-width="0.6" stroke-linejoin="round"/><polygon points="1010.4,561.0 1009.3,559.7 1007.6,558.8 1005.7,558.5 1004.0,559.0 1003.1,560.2 1003.2,561.6 1004.2,563.0 1006.0,563.9 1007.9,564.2 1009.5,563.6 1010.4,562.5" fill="#b4b4b0" stroke="#b4b4b0" stroke-width="0.6" stroke-linejoin="round"/><polygon points="1071.4,550.6 1069.7,547.7 1067.2,545.1 1064.2,542.8 1060.8,541.0 1057.0,539.7 1053.2,539.1 1049.4,539.0 1045.9,539.6 1042.9,540.8 1040.5,542.6 1038.7,544.8 1037.8,547.4 1037.8,550.2 1038.6,553.2 1040.2,556.0 1042.6,558.7 1045.7,561.1 1049.2,562.9 1053.0,564.2 1056.9,564.9 1060.8,565.0 1064.3,564.3 1067.3,563.1 1069.8,561.2 1071.4,558.9 1072.3,556.3 1072.2,553.5" fill="#f3f3f1" stroke="#f3f3f1" stroke-width="0.6" stroke-linejoin="round"/><polygon points="1069.1,550.7 1067.6,548.3 1065.5,546.0 1062.9,544.1 1060.0,542.5 1056.7,541.4 1053.4,540.8 1050.2,540.8 1047.2,541.3 1044.6,542.4 1042.5,543.9 1041.0,545.8 1040.2,548.0 1040.2,550.5 1040.9,553.0 1042.3,555.5 1044.4,557.7 1047.0,559.8 1050.0,561.4 1053.3,562.5 1056.7,563.1 1059.9,563.1 1063.0,562.6 1065.6,561.5 1067.7,559.9 1069.1,558.0 1069.9,555.7 1069.8,553.2" fill="url(#g14)"/><polygon points="1057.7,558.4 1056.4,556.6 1054.3,555.3 1051.8,554.7 1049.5,554.9 1047.8,555.8 1046.9,557.4 1047.2,559.2 1048.5,561.0 1050.6,562.4 1053.0,563.0 1055.4,562.8 1057.1,561.8 1058.0,560.2" fill="#8f8f8c" stroke="#8f8f8c" stroke-width="0.6" stroke-linejoin="round"/><polygon points="1055.2,557.4 1054.2,556.1 1052.4,555.1 1050.5,554.9 1048.9,555.4 1048.1,556.5 1048.2,558.0 1049.3,559.3 1051.0,560.2 1052.9,560.5 1054.5,560.0 1055.4,558.8" fill="#b4b4b0" stroke="#b4b4b0" stroke-width="0.6" stroke-linejoin="round"/><polygon points="974.6,682.1 973.0,678.5 970.4,675.3 967.2,672.5 963.4,670.3 959.2,668.8 954.9,668.0 950.6,668.1 946.5,668.9 942.9,670.5 940.0,672.8 937.8,675.6 936.5,678.9 936.1,682.5 936.8,686.1 938.4,689.7 940.9,693.0 944.1,695.9 948.0,698.2 952.2,699.8 956.7,700.6 961.1,700.5 965.2,699.6 968.8,697.9 971.8,695.6 973.9,692.7 975.1,689.3 975.4,685.7" fill="#f3f3f1" stroke="#f3f3f1" stroke-width="0.6" stroke-linejoin="round"/><polygon points="972.0,682.4 970.6,679.3 968.4,676.5 965.6,674.1 962.3,672.2 958.7,670.9 955.0,670.3 951.3,670.3 947.8,671.0 944.7,672.4 942.2,674.3 940.3,676.8 939.2,679.6 938.9,682.7 939.4,685.9 940.8,688.9 943.0,691.8 945.8,694.3 949.1,696.2 952.7,697.6 956.6,698.2 960.3,698.2 963.9,697.4 967.0,696.0 969.5,694.0 971.4,691.5 972.4,688.6 972.6,685.5" fill="url(#g15)"/><polygon points="959.7,690.3 958.3,688.1 956.1,686.4 953.3,685.7 950.7,686.0 948.5,687.3 947.4,689.3 947.6,691.6 948.9,693.8 951.1,695.4 953.9,696.2 956.6,695.9 958.7,694.6 959.8,692.6" fill="#8f8f8c" stroke="#8f8f8c" stroke-width="0.6" stroke-linejoin="round"/><polygon points="956.8,689.3 955.7,687.6 953.8,686.5 951.7,686.2 949.8,686.9 948.7,688.3 948.7,690.1 949.8,691.8 951.7,692.9 953.9,693.2 955.8,692.5 956.8,691.1" fill="#b4b4b0" stroke="#b4b4b0" stroke-width="0.6" stroke-linejoin="round"/><polygon points="1025.4,676.6 1023.6,673.2 1021.0,670.0 1017.7,667.2 1013.9,665.0 1009.7,663.5 1005.4,662.8 1001.2,662.8 997.3,663.6 993.8,665.2 991.0,667.4 988.9,670.2 987.8,673.5 987.6,677.0 988.3,680.6 990.0,684.1 992.6,687.4 995.9,690.2 999.8,692.5 1004.1,694.0 1008.5,694.8 1012.8,694.8 1016.8,693.9 1020.3,692.3 1023.1,689.9 1025.1,687.0 1026.1,683.8 1026.2,680.2" fill="#f3f3f1" stroke="#f3f3f1" stroke-width="0.6" stroke-linejoin="round"/><polygon points="1022.8,676.9 1021.3,673.9 1019.0,671.2 1016.2,668.8 1012.9,666.9 1009.3,665.6 1005.6,665.0 1002.0,665.0 998.6,665.7 995.6,667.1 993.2,669.0 991.4,671.4 990.4,674.2 990.3,677.2 990.9,680.3 992.4,683.4 994.6,686.2 997.5,688.6 1000.8,690.5 1004.5,691.9 1008.2,692.5 1011.9,692.5 1015.4,691.7 1018.4,690.3 1020.8,688.3 1022.5,685.9 1023.4,683.0 1023.5,680.0" fill="url(#g16)"/><polygon points="1010.3,684.8 1008.9,682.6 1006.6,681.0 1003.9,680.3 1001.3,680.6 999.3,681.8 998.3,683.8 998.5,686.0 999.8,688.2 1002.1,689.8 1004.9,690.6 1007.5,690.3 1009.5,689.0 1010.5,687.0" fill="#8f8f8c" stroke="#8f8f8c" stroke-width="0.6" stroke-linejoin="round"/><polygon points="1007.5,683.8 1006.4,682.1 1004.5,681.0 1002.4,680.8 1000.6,681.4 999.5,682.8 999.6,684.6 1000.8,686.3 1002.7,687.4 1004.8,687.6 1006.6,686.9 1007.6,685.5" fill="#b4b4b0" stroke="#b4b4b0" stroke-width="0.6" stroke-linejoin="round"/><polygon points="1074.9,671.3 1073.1,667.9 1070.4,664.7 1067.0,662.0 1063.2,659.9 1059.1,658.4 1054.8,657.7 1050.7,657.7 1046.9,658.5 1043.5,660.0 1040.8,662.2 1038.9,665.0 1037.9,668.2 1037.8,671.6 1038.7,675.2 1040.6,678.7 1043.2,681.9 1046.6,684.7 1050.5,686.9 1054.7,688.4 1059.0,689.2 1063.3,689.2 1067.2,688.3 1070.5,686.7 1073.2,684.4 1075.1,681.6 1076.0,678.3 1075.9,674.8" fill="#f3f3f1" stroke="#f3f3f1" stroke-width="0.6" stroke-linejoin="round"/><polygon points="1072.4,671.6 1070.8,668.6 1068.5,665.9 1065.6,663.6 1062.3,661.7 1058.8,660.5 1055.1,659.8 1051.6,659.8 1048.3,660.5 1045.4,661.9 1043.1,663.8 1041.4,666.1 1040.6,668.9 1040.5,671.9 1041.3,674.9 1042.9,677.9 1045.1,680.7 1048.0,683.1 1051.4,685.0 1055.0,686.3 1058.7,686.9 1062.4,686.9 1065.7,686.2 1068.6,684.8 1070.9,682.8 1072.5,680.4 1073.3,677.6 1073.3,674.6" fill="url(#g17)"/><polygon points="1059.8,679.4 1058.4,677.2 1056.1,675.7 1053.4,674.9 1050.8,675.2 1048.9,676.4 1047.9,678.4 1048.2,680.6 1049.7,682.8 1052.0,684.4 1054.7,685.1 1057.3,684.8 1059.2,683.6 1060.1,681.6" fill="#8f8f8c" stroke="#8f8f8c" stroke-width="0.6" stroke-linejoin="round"/><polygon points="1057.1,678.4 1055.9,676.8 1054.0,675.7 1051.9,675.4 1050.2,676.1 1049.2,677.5 1049.4,679.2 1050.6,680.9 1052.5,681.9 1054.6,682.2 1056.3,681.5 1057.3,680.1" fill="#b4b4b0" stroke="#b4b4b0" stroke-width="0.6" stroke-linejoin="round"/><polygon points="1123.4,666.1 1121.5,662.7 1118.7,659.6 1115.3,657.0 1111.5,654.9 1107.4,653.4 1103.2,652.7 1099.1,652.7 1095.4,653.5 1092.1,655.0 1089.6,657.1 1087.8,659.9 1086.9,663.0 1087.0,666.4 1088.0,669.9 1089.9,673.3 1092.7,676.5 1096.1,679.3 1100.0,681.4 1104.2,683.0 1108.5,683.7 1112.7,683.7 1116.5,682.8 1119.7,681.2 1122.2,679.0 1123.9,676.2 1124.7,673.0 1124.5,669.6" fill="#f3f3f1" stroke="#f3f3f1" stroke-width="0.6" stroke-linejoin="round"/><polygon points="1121.0,666.4 1119.3,663.5 1116.9,660.8 1114.0,658.5 1110.7,656.7 1107.1,655.4 1103.5,654.8 1100.0,654.8 1096.8,655.5 1094.0,656.8 1091.8,658.6 1090.3,661.0 1089.6,663.7 1089.6,666.6 1090.5,669.6 1092.2,672.6 1094.5,675.3 1097.5,677.7 1100.8,679.5 1104.4,680.8 1108.1,681.5 1111.7,681.5 1115.0,680.7 1117.7,679.4 1119.9,677.4 1121.4,675.1 1122.1,672.3 1121.9,669.4" fill="url(#g18)"/><polygon points="1108.2,674.1 1106.7,672.0 1104.4,670.5 1101.7,669.7 1099.2,670.0 1097.4,671.2 1096.5,673.1 1096.9,675.3 1098.4,677.4 1100.7,679.0 1103.4,679.7 1106.0,679.5 1107.8,678.2 1108.6,676.3" fill="#8f8f8c" stroke="#8f8f8c" stroke-width="0.6" stroke-linejoin="round"/><polygon points="1105.6,673.1 1104.4,671.5 1102.5,670.5 1100.4,670.2 1098.7,670.9 1097.8,672.2 1098.0,673.9 1099.3,675.5 1101.2,676.6 1103.3,676.9 1105.0,676.2 1105.8,674.8" fill="#b4b4b0" stroke="#b4b4b0" stroke-width="0.6" stroke-linejoin="round"/><path d="M459.8,619.1 L456.3,604.7 L456.3,602.6 L457.1,600.7 L458.8,598.9 L461.1,597.5 L464.0,596.5 L467.2,596.0 L492.7,593.9" fill="none" stroke="#959595" stroke-width="9.1" stroke-linecap="round" stroke-linejoin="round"/><path d="M458.7,617.2 L455.3,602.8 L455.2,600.8 L456.0,598.9 L457.7,597.1 L460.0,595.7 L462.9,594.7 L466.1,594.1 L491.6,592.1" fill="none" stroke="#d2d2d2" stroke-width="6.5" stroke-linecap="round" stroke-linejoin="round"/><path d="M458.2,616.3 L454.7,601.9 L454.7,599.9 L455.5,598.0 L457.1,596.2 L459.5,594.8 L462.4,593.8 L465.6,593.2 L491.0,591.2" fill="none" stroke="#e6e6e6" stroke-width="3.3" stroke-linecap="round" stroke-linejoin="round"/><path d="M613.0,606.2 L611.9,592.1 L611.4,590.2 L610.1,588.5 L608.0,587.0 L605.5,586.0 L602.5,585.5 L599.4,585.5 L575.0,587.4" fill="none" stroke="#959595" stroke-width="8.6" stroke-linecap="round" stroke-linejoin="round"/><path d="M612.0,604.5 L610.9,590.4 L610.4,588.5 L609.0,586.7 L607.0,585.3 L604.4,584.3 L601.5,583.8 L598.4,583.8 L574.0,585.7" fill="none" stroke="#d2d2d2" stroke-width="6.2" stroke-linecap="round" stroke-linejoin="round"/><path d="M611.4,603.7 L610.4,589.5 L609.8,587.6 L608.5,585.9 L606.5,584.5 L603.9,583.5 L601.0,582.9 L597.8,582.9 L573.5,584.8" fill="none" stroke="#e6e6e6" stroke-width="3.1" stroke-linecap="round" stroke-linejoin="round"/><polygon points="491.3,586.8 491.4,584.6 491.6,583.3 494.4,577.2 494.9,576.8 499.7,573.5 565.5,568.5 570.5,571.1 574.2,576.7 574.4,577.5 574.6,579.3 574.9,581.9 575.1,584.9 575.4,588.3 575.6,591.5 575.8,594.4 575.9,596.6 575.9,597.9 575.8,598.2 573.0,604.3 568.4,607.6 502.4,613.1 497.2,610.6 493.4,604.9 493.0,604.1 492.6,602.4 492.1,599.8 491.8,596.6 491.5,593.1 491.3,589.8" fill="url(#g19)"/><polygon points="503.6,579.8 503.8,575.7 504.1,573.4 504.6,573.0 526.2,571.4 526.7,572.9 527.4,576.2 528.0,580.9 528.6,586.6 529.1,592.7 529.5,598.6 529.6,603.9 529.6,607.9 529.4,610.4 529.0,611.0 507.4,612.8 506.8,611.5 506.0,608.3 505.3,603.5 504.6,597.7 504.1,591.4 503.7,585.2" fill="url(#g20)"/><path d="M616.1,644.5 L615.0,630.5 L615.3,628.5 L616.4,626.6 L618.2,624.9 L620.7,623.5 L623.6,622.5 L626.8,622.0 L651.3,619.8" fill="none" stroke="#959595" stroke-width="8.8" stroke-linecap="round" stroke-linejoin="round"/><path d="M615.0,642.7 L614.0,628.7 L614.2,626.8 L615.3,624.9 L617.2,623.2 L619.6,621.8 L622.5,620.7 L625.7,620.2 L650.3,618.1" fill="none" stroke="#d2d2d2" stroke-width="6.3" stroke-linecap="round" stroke-linejoin="round"/><path d="M614.5,641.8 L613.4,627.9 L613.7,625.9 L614.8,624.0 L616.6,622.3 L619.1,620.9 L622.0,619.9 L625.2,619.3 L649.8,617.2" fill="none" stroke="#e6e6e6" stroke-width="3.2" stroke-linecap="round" stroke-linejoin="round"/><path d="M764.1,630.9 L765.4,617.2 L765.1,615.3 L764.1,613.6 L762.4,612.3 L760.1,611.3 L757.4,610.8 L754.4,610.8 L730.9,612.9" fill="none" stroke="#959595" stroke-width="8.3" stroke-linecap="round" stroke-linejoin="round"/><path d="M763.2,629.3 L764.4,615.5 L764.1,613.7 L763.2,612.0 L761.4,610.6 L759.2,609.7 L756.4,609.2 L753.4,609.2 L729.9,611.2" fill="none" stroke="#d2d2d2" stroke-width="6.0" stroke-linecap="round" stroke-linejoin="round"/><path d="M762.7,628.4 L763.9,614.7 L763.6,612.8 L762.7,611.2 L761.0,609.8 L758.7,608.8 L755.9,608.3 L752.9,608.4 L729.4,610.4" fill="none" stroke="#e6e6e6" stroke-width="3.0" stroke-linecap="round" stroke-linejoin="round"/><polygon points="650.4,609.7 650.5,608.9 653.2,602.7 657.8,599.3 721.4,594.1 726.3,596.6 726.9,597.0 730.3,602.5 730.8,603.8 731.2,606.0 731.6,609.0 732.0,612.3 732.2,615.6 732.3,618.8 732.3,621.3 732.1,622.9 729.6,628.7 729.2,629.8 724.7,633.1 661.0,639.0 655.9,636.4 652.2,630.8 652.1,630.4 651.9,628.9 651.6,626.6 651.3,623.7 651.0,620.4 650.7,617.0 650.5,613.9 650.4,611.4" fill="url(#g21)"/><polygon points="662.4,603.4 662.4,600.2 662.6,598.8 683.4,597.1 683.9,597.6 684.5,600.1 685.1,604.2 685.8,609.6 686.3,615.8 686.8,622.1 687.1,627.8 687.2,632.5 687.0,635.5 686.7,636.7 665.9,638.6 665.5,637.9 665.0,635.2 664.5,631.1 663.9,625.7 663.4,619.7 662.9,613.6 662.6,608.0" fill="url(#g22)"/><path d="M403.5,664.0 L401.3,657.2 L401.2,655.2 L401.9,653.3 L403.5,651.5 L405.9,650.1 L408.9,649.1 L412.2,648.5 L443.2,645.8" fill="none" stroke="#959595" stroke-width="9.5" stroke-linecap="round" stroke-linejoin="round"/><path d="M402.3,662.1 L400.2,655.3 L400.0,653.3 L400.8,651.4 L402.4,649.6 L404.8,648.2 L407.7,647.2 L411.1,646.6 L442.1,643.9" fill="none" stroke="#d2d2d2" stroke-width="6.8" stroke-linecap="round" stroke-linejoin="round"/><path d="M401.7,661.1 L399.6,654.3 L399.5,652.4 L400.2,650.4 L401.8,648.7 L404.2,647.3 L407.2,646.2 L410.5,645.7 L441.5,642.9" fill="none" stroke="#e6e6e6" stroke-width="3.4" stroke-linecap="round" stroke-linejoin="round"/><path d="M564.6,649.2 L563.7,642.5 L563.0,640.7 L561.6,639.0 L559.4,637.6 L556.6,636.7 L553.5,636.2 L550.2,636.3 L520.6,638.9" fill="none" stroke="#959595" stroke-width="8.9" stroke-linecap="round" stroke-linejoin="round"/><path d="M563.5,647.4 L562.6,640.7 L562.0,638.9 L560.5,637.2 L558.3,635.9 L555.6,634.9 L552.4,634.4 L549.2,634.5 L519.5,637.1" fill="none" stroke="#d2d2d2" stroke-width="6.4" stroke-linecap="round" stroke-linejoin="round"/><path d="M563.0,646.5 L562.1,639.9 L561.4,638.0 L560.0,636.3 L557.8,635.0 L555.0,634.0 L551.9,633.5 L548.6,633.6 L519.0,636.2" fill="none" stroke="#e6e6e6" stroke-width="3.2" stroke-linecap="round" stroke-linejoin="round"/><polygon points="441.6,642.4 441.6,639.7 441.8,637.6 442.1,636.2 444.0,631.6 444.6,631.1 448.4,628.8 513.3,623.2 517.3,624.8 519.9,629.2 520.2,629.8 520.5,631.3 520.8,633.5 521.1,636.2 521.4,639.2 521.6,642.2 521.6,644.8 521.6,646.9 521.5,648.2 519.6,652.8 519.3,653.4 515.6,655.7 502.6,656.9 450.6,661.7 446.5,660.0 445.8,659.3 443.3,655.1 442.8,653.6 442.4,651.4 441.9,648.6 441.7,645.5" fill="url(#g23)"/><polyline points="462.2,627.9 461.8,628.6 461.5,629.8 461.3,631.7 461.1,634.0 461.1,636.7 461.1,639.7 461.3,642.8 461.5,646.0 461.8,649.2 462.2,652.1 462.7,654.7 463.1,656.9 463.6,658.5 464.1,659.6 464.5,660.1" fill="none" stroke="#c39a62" stroke-width="0.9" opacity="0.5"/><polyline points="499.3,624.7 499.1,625.4 498.9,626.6 498.8,628.4 498.7,630.7 498.7,633.4 498.8,636.3 499.0,639.5 499.2,642.7 499.5,645.8 499.9,648.7 500.2,651.3 500.6,653.4 501.0,655.1 501.4,656.2 501.7,656.7" fill="none" stroke="#c39a62" stroke-width="0.9" opacity="0.5"/><path d="M619.3,685.0 L618.8,678.5 L619.1,676.6 L620.2,674.8 L622.1,673.1 L624.6,671.7 L627.6,670.6 L630.8,670.1 L660.1,667.2" fill="none" stroke="#959595" stroke-width="9.0" stroke-linecap="round" stroke-linejoin="round"/><path d="M618.2,683.2 L617.7,676.7 L618.0,674.8 L619.2,673.0 L621.0,671.3 L623.6,669.9 L626.5,668.8 L629.8,668.3 L659.0,665.4" fill="none" stroke="#d2d2d2" stroke-width="6.5" stroke-linecap="round" stroke-linejoin="round"/><path d="M617.7,682.4 L617.2,675.8 L617.5,673.9 L618.6,672.1 L620.5,670.4 L623.0,669.0 L626.0,667.9 L629.2,667.4 L658.5,664.5" fill="none" stroke="#e6e6e6" stroke-width="3.2" stroke-linecap="round" stroke-linejoin="round"/><path d="M771.6,669.8 L772.3,663.4 L772.1,661.6 L771.1,660.0 L769.3,658.7 L767.0,657.8 L764.2,657.3 L761.2,657.4 L733.2,660.1" fill="none" stroke="#959595" stroke-width="8.4" stroke-linecap="round" stroke-linejoin="round"/><path d="M770.6,668.1 L771.3,661.7 L771.1,659.9 L770.1,658.3 L768.3,657.0 L766.0,656.1 L763.2,655.7 L760.2,655.7 L732.1,658.4" fill="none" stroke="#d2d2d2" stroke-width="6.1" stroke-linecap="round" stroke-linejoin="round"/><path d="M770.1,667.3 L770.8,660.8 L770.5,659.0 L769.5,657.4 L767.8,656.1 L765.5,655.2 L762.7,654.8 L759.7,654.9 L731.6,657.6" fill="none" stroke="#e6e6e6" stroke-width="3.0" stroke-linecap="round" stroke-linejoin="round"/><polygon points="659.2,658.0 659.3,657.5 661.1,652.7 664.7,650.4 677.2,649.2 713.7,645.8 726.0,644.7 729.8,646.2 730.3,646.8 732.7,650.9 733.1,652.2 733.5,654.3 733.9,657.0 734.2,660.0 734.4,663.0 734.5,665.7 734.4,667.9 734.3,669.2 732.6,673.8 732.2,674.5 728.8,676.7 667.3,682.9 663.5,681.3 660.9,677.0 660.7,676.5 660.5,675.1 660.2,673.0 660.0,670.3 659.7,667.3 659.5,664.3 659.3,661.6 659.2,659.4" fill="url(#g24)"/><polyline points="678.1,649.5 678.4,650.3 678.6,651.6 678.9,653.4 679.3,655.7 679.6,658.4 679.9,661.4 680.2,664.6 680.4,667.7 680.6,670.8 680.8,673.7 680.9,676.2 680.9,678.3 680.9,679.9 680.8,680.9 680.7,681.3" fill="none" stroke="#c39a62" stroke-width="0.9" opacity="0.5"/><polyline points="713.2,646.2 713.6,646.9 713.9,648.2 714.3,650.1 714.7,652.4 715.1,655.0 715.4,658.0 715.7,661.1 716.0,664.2 716.2,667.3 716.3,670.1 716.3,672.7 716.3,674.8 716.2,676.4 716.0,677.4 715.8,677.8" fill="none" stroke="#c39a62" stroke-width="0.9" opacity="0.5"/><path d="M400.1,707.0 L397.9,700.3 L397.7,698.4 L398.5,696.5 L400.2,694.7 L402.6,693.3 L405.7,692.2 L409.2,691.6 L441.1,688.5" fill="none" stroke="#959595" stroke-width="9.8" stroke-linecap="round" stroke-linejoin="round"/><path d="M399.0,705.0 L396.7,698.4 L396.6,696.4 L397.3,694.5 L399.0,692.8 L401.5,691.3 L404.5,690.3 L408.0,689.7 L440.0,686.5" fill="none" stroke="#d2d2d2" stroke-width="7.1" stroke-linecap="round" stroke-linejoin="round"/><path d="M398.4,704.0 L396.1,697.4 L396.0,695.4 L396.8,693.5 L398.4,691.8 L400.9,690.3 L403.9,689.3 L407.4,688.7 L439.4,685.6" fill="none" stroke="#e6e6e6" stroke-width="3.5" stroke-linecap="round" stroke-linejoin="round"/><path d="M566.3,690.3 L565.4,683.8 L564.7,682.0 L563.2,680.3 L561.0,679.0 L558.1,678.1 L554.9,677.7 L551.5,677.8 L521.0,680.7" fill="none" stroke="#959595" stroke-width="9.2" stroke-linecap="round" stroke-linejoin="round"/><path d="M565.2,688.5 L564.3,681.9 L563.6,680.1 L562.1,678.5 L559.9,677.2 L557.0,676.3 L553.8,675.9 L550.4,675.9 L519.9,678.9" fill="none" stroke="#d2d2d2" stroke-width="6.6" stroke-linecap="round" stroke-linejoin="round"/><path d="M564.7,687.6 L563.8,681.0 L563.1,679.2 L561.6,677.6 L559.3,676.3 L556.5,675.4 L553.3,674.9 L549.9,675.0 L519.3,678.0" fill="none" stroke="#e6e6e6" stroke-width="3.3" stroke-linecap="round" stroke-linejoin="round"/><polygon points="439.4,685.4 439.5,682.5 439.7,680.3 440.0,678.8 441.9,674.0 442.6,673.3 446.5,670.9 460.2,669.6 513.5,664.6 517.6,666.2 520.3,670.7 520.5,671.2 520.9,672.6 521.2,674.9 521.5,677.6 521.8,680.7 522.0,683.8 522.0,686.6 522.0,688.8 521.9,690.3 520.0,695.0 519.6,695.8 515.8,698.2 502.4,699.5 462.4,703.5 448.7,704.9 444.5,703.3 443.8,702.7 441.3,698.3 440.7,696.9 440.2,694.6 439.8,691.8 439.5,688.6" fill="url(#g25)"/><polyline points="460.7,670.0 460.3,670.8 460.0,672.2 459.8,674.2 459.6,676.6 459.6,679.5 459.6,682.6 459.8,685.9 460.0,689.3 460.4,692.5 460.8,695.4 461.2,698.1 461.7,700.2 462.2,701.8 462.7,702.8 463.1,703.2" fill="none" stroke="#c39a62" stroke-width="0.9" opacity="0.5"/><polyline points="499.1,666.4 498.8,667.2 498.6,668.6 498.4,670.5 498.4,673.0 498.4,675.8 498.5,678.9 498.7,682.2 498.9,685.5 499.2,688.6 499.6,691.6 500.0,694.2 500.4,696.3 500.8,698.0 501.2,699.0 501.5,699.4" fill="none" stroke="#c39a62" stroke-width="0.9" opacity="0.5"/><path d="M622.8,728.1 L621.8,714.6 L622.1,712.7 L623.3,710.9 L625.2,709.2 L627.8,707.7 L630.9,706.7 L634.3,706.1 L660.4,703.3" fill="none" stroke="#959595" stroke-width="9.3" stroke-linecap="round" stroke-linejoin="round"/><path d="M621.6,726.3 L620.7,712.8 L621.0,710.9 L622.1,709.0 L624.1,707.3 L626.7,705.9 L629.8,704.8 L633.2,704.2 L659.3,701.5" fill="none" stroke="#d2d2d2" stroke-width="6.7" stroke-linecap="round" stroke-linejoin="round"/><path d="M621.1,725.3 L620.1,711.8 L620.4,709.9 L621.6,708.1 L623.5,706.4 L626.2,704.9 L629.3,703.9 L632.6,703.3 L658.7,700.5" fill="none" stroke="#e6e6e6" stroke-width="3.4" stroke-linecap="round" stroke-linejoin="round"/><path d="M779.6,711.0 L781.1,697.7 L780.9,695.9 L779.9,694.4 L778.1,693.1 L775.7,692.2 L772.8,691.8 L769.7,691.9 L744.7,694.5" fill="none" stroke="#959595" stroke-width="8.8" stroke-linecap="round" stroke-linejoin="round"/><path d="M778.5,709.3 L780.1,696.0 L779.8,694.2 L778.8,692.6 L777.1,691.3 L774.6,690.5 L771.8,690.1 L768.6,690.1 L743.7,692.7" fill="none" stroke="#d2d2d2" stroke-width="6.3" stroke-linecap="round" stroke-linejoin="round"/><path d="M778.0,708.4 L779.5,695.1 L779.3,693.3 L778.3,691.7 L776.5,690.5 L774.1,689.6 L771.2,689.2 L768.1,689.3 L743.1,691.9" fill="none" stroke="#e6e6e6" stroke-width="3.2" stroke-linecap="round" stroke-linejoin="round"/><polygon points="659.4,692.2 659.5,691.7 662.4,685.0 667.2,681.3 734.6,674.5 739.9,677.1 740.5,678.0 744.2,683.6 744.7,685.3 745.2,687.9 745.7,691.1 746.1,694.7 746.3,698.3 746.4,701.5 746.3,704.0 746.1,705.5 743.5,711.9 743.0,712.6 738.2,716.3 670.7,723.7 665.3,721.0 661.4,715.0 661.2,714.3 660.9,712.6 660.6,709.9 660.2,706.7 659.9,703.1 659.7,699.5 659.5,696.3 659.4,693.8" fill="url(#g26)"/><polygon points="672.0,684.6 672.1,681.7 672.4,680.6 694.4,678.4 695.0,679.5 695.6,682.5 696.4,687.3 697.1,693.3 697.7,700.0 698.2,706.7 698.5,712.6 698.5,717.2 698.4,720.0 698.0,720.8 675.9,723.2 675.4,721.9 674.9,718.7 674.2,713.9 673.6,707.9 673.0,701.4 672.5,695.0 672.2,689.2" fill="url(#g27)"/><path d="M396.6,752.8 L394.3,746.3 L394.1,744.4 L394.9,742.5 L396.6,740.8 L399.1,739.3 L402.3,738.2 L405.9,737.6 L438.9,734.1" fill="none" stroke="#959595" stroke-width="10.2" stroke-linecap="round" stroke-linejoin="round"/><path d="M395.4,750.8 L393.1,744.3 L392.9,742.4 L393.7,740.5 L395.4,738.7 L397.9,737.3 L401.1,736.2 L404.7,735.5 L437.7,732.0" fill="none" stroke="#d2d2d2" stroke-width="7.3" stroke-linecap="round" stroke-linejoin="round"/><path d="M394.8,749.7 L392.5,743.2 L392.3,741.3 L393.1,739.5 L394.8,737.7 L397.3,736.3 L400.5,735.2 L404.1,734.5 L437.1,731.0" fill="none" stroke="#e6e6e6" stroke-width="3.7" stroke-linecap="round" stroke-linejoin="round"/><path d="M568.1,734.1 L567.2,727.7 L566.5,725.9 L565.0,724.3 L562.6,723.1 L559.7,722.2 L556.4,721.8 L552.9,722.0 L521.4,725.3" fill="none" stroke="#959595" stroke-width="9.5" stroke-linecap="round" stroke-linejoin="round"/><path d="M567.0,732.2 L566.1,725.8 L565.4,724.0 L563.8,722.4 L561.5,721.2 L558.6,720.3 L555.3,719.9 L551.8,720.1 L520.2,723.4" fill="none" stroke="#d2d2d2" stroke-width="6.8" stroke-linecap="round" stroke-linejoin="round"/><path d="M566.4,731.2 L565.5,724.8 L564.8,723.0 L563.3,721.5 L560.9,720.2 L558.0,719.4 L554.7,719.0 L551.2,719.1 L519.7,722.5" fill="none" stroke="#e6e6e6" stroke-width="3.4" stroke-linecap="round" stroke-linejoin="round"/><polygon points="437.1,731.3 437.2,728.2 437.4,725.8 437.8,724.1 439.8,719.2 440.5,718.3 444.5,715.7 458.7,714.3 513.7,708.6 517.9,710.3 518.3,710.9 521.0,715.3 521.3,716.7 521.6,718.9 522.0,721.7 522.2,724.9 522.4,728.1 522.5,731.0 522.5,733.5 522.3,735.1 522.1,735.8 520.0,740.9 516.1,743.4 502.2,745.0 460.9,749.5 446.8,751.0 442.4,749.4 441.6,748.9 439.1,744.4 438.5,743.0 438.0,740.8 437.6,737.9 437.3,734.6" fill="url(#g28)"/><polyline points="459.1,714.8 458.7,715.7 458.4,717.3 458.2,719.5 458.0,722.1 458.0,725.2 458.0,728.5 458.2,731.9 458.4,735.4 458.8,738.7 459.2,741.7 459.6,744.3 460.1,746.4 460.7,748.0 461.2,748.9 461.7,749.2" fill="none" stroke="#c39a62" stroke-width="0.9" opacity="0.5"/><polyline points="498.8,710.7 498.5,711.6 498.3,713.2 498.1,715.4 498.1,718.0 498.1,721.0 498.2,724.3 498.4,727.7 498.6,731.1 498.9,734.3 499.3,737.3 499.7,739.9 500.1,742.1 500.5,743.6 500.9,744.5 501.3,744.8" fill="none" stroke="#c39a62" stroke-width="0.9" opacity="0.5"/><path d="M453.3,794.5 L449.3,781.3 L449.2,779.4 L450.2,777.5 L452.0,775.8 L454.7,774.3 L458.0,773.2 L461.6,772.5 L490.6,769.2" fill="none" stroke="#959595" stroke-width="10.4" stroke-linecap="round" stroke-linejoin="round"/><path d="M452.1,792.4 L448.1,779.2 L448.0,777.3 L448.9,775.4 L450.8,773.7 L453.4,772.2 L456.7,771.1 L460.4,770.4 L489.3,767.1" fill="none" stroke="#d2d2d2" stroke-width="7.5" stroke-linecap="round" stroke-linejoin="round"/><path d="M451.5,791.4 L447.4,778.1 L447.4,776.3 L448.3,774.4 L450.2,772.6 L452.8,771.2 L456.1,770.1 L459.8,769.4 L488.7,766.1" fill="none" stroke="#e6e6e6" stroke-width="3.7" stroke-linecap="round" stroke-linejoin="round"/><path d="M626.4,774.0 L625.5,760.8 L624.9,759.1 L623.4,757.6 L621.2,756.3 L618.3,755.5 L615.0,755.2 L611.4,755.4 L583.9,758.5" fill="none" stroke="#959595" stroke-width="9.7" stroke-linecap="round" stroke-linejoin="round"/><path d="M625.3,772.1 L624.3,758.9 L623.7,757.2 L622.3,755.6 L620.0,754.4 L617.1,753.6 L613.8,753.3 L610.3,753.4 L582.7,756.6" fill="none" stroke="#d2d2d2" stroke-width="7.0" stroke-linecap="round" stroke-linejoin="round"/><path d="M624.7,771.1 L623.7,757.9 L623.2,756.2 L621.7,754.6 L619.4,753.4 L616.5,752.6 L613.2,752.3 L609.7,752.5 L582.1,755.6" fill="none" stroke="#e6e6e6" stroke-width="3.5" stroke-linecap="round" stroke-linejoin="round"/><polygon points="488.9,762.6 489.1,759.6 489.3,757.5 489.7,756.6 493.1,749.4 498.5,745.3 573.0,737.1 578.8,739.9 583.0,746.2 583.1,746.6 583.3,748.1 583.6,750.6 583.9,753.9 584.2,757.6 584.5,761.4 584.7,765.0 584.8,767.9 584.9,769.9 584.8,770.9 581.6,778.0 576.4,782.0 501.6,791.0 495.7,788.2 495.0,787.8 490.9,781.5 490.4,780.0 489.9,777.5 489.5,774.1 489.2,770.2 489.0,766.2" fill="url(#g29)"/><polygon points="503.0,755.3 503.1,749.8 503.5,746.1 504.2,744.6 528.6,741.9 529.2,742.6 529.9,745.4 530.6,750.1 531.3,756.1 531.9,762.9 532.3,769.9 532.5,776.4 532.5,781.9 532.2,785.7 531.8,787.5 507.3,790.4 506.5,790.0 505.7,787.3 504.8,782.6 504.1,776.4 503.5,769.3 503.1,762.0" fill="url(#g30)"/><polygon points="372.9,677.4 375.7,648.6 364.5,615.9 361.3,645.0" fill="#0e0e0e" stroke="#0e0e0e" stroke-width="0.6" stroke-linejoin="round"/><polygon points="363.2,685.1 372.9,677.4 361.3,645.0 351.2,652.8" fill="#141414" stroke="#141414" stroke-width="0.6" stroke-linejoin="round"/><polygon points="323.5,688.8 363.2,685.1 351.2,652.8 310.0,656.4" fill="#252525" stroke="#252525" stroke-width="0.6" stroke-linejoin="round"/><polygon points="315.3,682.8 323.5,688.8 310.0,656.4 301.5,650.3" fill="#2b2b2b" stroke="#2b2b2b" stroke-width="0.6" stroke-linejoin="round"/><polygon points="310.0,656.4 351.2,652.8 361.3,645.0 364.5,615.9 356.2,610.1 316.3,613.3 306.0,620.6 301.5,650.3" fill="#363636" stroke="#363636" stroke-width="0.6" stroke-linejoin="round"/><polygon points="368.5,721.7 371.5,691.1 359.8,658.9 356.4,690.0" fill="#0e0e0e" stroke="#0e0e0e" stroke-width="0.6" stroke-linejoin="round"/><polygon points="358.4,730.0 368.5,721.7 356.4,690.0 345.9,698.3" fill="#141414" stroke="#141414" stroke-width="0.6" stroke-linejoin="round"/><polygon points="317.4,734.2 358.4,730.0 345.9,698.3 303.2,702.5" fill="#252525" stroke="#252525" stroke-width="0.6" stroke-linejoin="round"/><polygon points="309.0,727.8 317.4,734.2 303.2,702.5 294.4,695.9" fill="#2b2b2b" stroke="#2b2b2b" stroke-width="0.6" stroke-linejoin="round"/><polygon points="303.2,702.5 345.9,698.3 356.4,690.0 359.8,658.9 351.2,652.8 310.0,656.4 299.3,664.3 294.4,695.9" fill="#363636" stroke="#363636" stroke-width="0.6" stroke-linejoin="round"/><polygon points="363.8,769.1 367.1,736.3 354.8,704.8 351.2,738.1" fill="#0e0e0e" stroke="#0e0e0e" stroke-width="0.6" stroke-linejoin="round"/><polygon points="353.4,777.9 363.8,769.1 351.2,738.1 340.2,747.0" fill="#141414" stroke="#141414" stroke-width="0.6" stroke-linejoin="round"/><polygon points="311.0,782.7 353.4,777.9 340.2,747.0 296.0,751.8" fill="#252525" stroke="#252525" stroke-width="0.6" stroke-linejoin="round"/><polygon points="302.2,775.9 311.0,782.7 296.0,751.8 286.9,744.8" fill="#2b2b2b" stroke="#2b2b2b" stroke-width="0.6" stroke-linejoin="round"/><polygon points="296.0,751.8 340.2,747.0 351.2,738.1 354.8,704.8 345.9,698.3 303.2,702.5 292.1,711.0 286.9,744.8" fill="#363636" stroke="#363636" stroke-width="0.6" stroke-linejoin="round"/><polygon points="340.3,637.6 341.6,626.8 310.7,543.0 308.9,554.0" fill="#bf9f64" stroke="#bf9f64" stroke-width="0.6" stroke-linejoin="round"/><polygon points="325.3,638.8 340.3,637.6 308.9,554.0 292.5,555.2" fill="#e4c48a" stroke="#e4c48a" stroke-width="0.6" stroke-linejoin="round"/><polygon points="292.5,555.2 308.9,554.0 303.7,546.9 294.9,547.5" fill="#e6c88e" stroke="#e6c88e" stroke-width="0.6" stroke-linejoin="round"/><polygon points="308.9,554.0 310.7,543.0 304.6,541.0 303.7,546.9" fill="#c9a86c" stroke="#c9a86c" stroke-width="0.6" stroke-linejoin="round"/><polygon points="294.9,547.5 303.7,546.9 304.6,541.0 295.9,541.6" fill="#f5dba6" stroke="#f5dba6" stroke-width="0.6" stroke-linejoin="round"/><polygon points="294.4,544.1 292.5,555.2 294.9,547.5 295.9,541.6" fill="#f0d49a" stroke="#f0d49a" stroke-width="0.6" stroke-linejoin="round"/><polygon points="294.4,544.1 310.7,543.0 304.6,541.0 295.9,541.6" fill="#f6dca8" stroke="#f6dca8" stroke-width="0.6" stroke-linejoin="round"/><polygon points="334.7,682.2 336.1,670.6 303.5,588.0 301.6,599.8" fill="#bf9f64" stroke="#bf9f64" stroke-width="0.6" stroke-linejoin="round"/><polygon points="319.2,683.6 334.7,682.2 301.6,599.8 284.5,601.1" fill="#e4c48a" stroke="#e4c48a" stroke-width="0.6" stroke-linejoin="round"/><polygon points="284.5,601.1 301.6,599.8 296.2,592.6 287.1,593.3" fill="#e6c88e" stroke="#e6c88e" stroke-width="0.6" stroke-linejoin="round"/><polygon points="301.6,599.8 303.5,588.0 297.2,586.3 296.2,592.6" fill="#c9a86c" stroke="#c9a86c" stroke-width="0.6" stroke-linejoin="round"/><polygon points="287.1,593.3 296.2,592.6 297.2,586.3 288.2,587.0" fill="#f5dba6" stroke="#f5dba6" stroke-width="0.6" stroke-linejoin="round"/><polygon points="286.6,589.2 284.5,601.1 287.1,593.3 288.2,587.0" fill="#f0d49a" stroke="#f0d49a" stroke-width="0.6" stroke-linejoin="round"/><polygon points="286.6,589.2 303.5,588.0 297.2,586.3 288.2,587.0" fill="#f6dca8" stroke="#f6dca8" stroke-width="0.6" stroke-linejoin="round"/><polygon points="328.7,729.8 330.2,717.5 295.8,636.3 293.8,649.1" fill="#bf9f64" stroke="#bf9f64" stroke-width="0.6" stroke-linejoin="round"/><polygon points="312.6,731.5 328.7,729.8 293.8,649.1 276.0,650.6" fill="#e4c48a" stroke="#e4c48a" stroke-width="0.6" stroke-linejoin="round"/><polygon points="276.0,650.6 293.8,649.1 288.1,641.7 278.6,642.6" fill="#e6c88e" stroke="#e6c88e" stroke-width="0.6" stroke-linejoin="round"/><polygon points="293.8,649.1 295.8,636.3 289.2,635.0 288.1,641.7" fill="#c9a86c" stroke="#c9a86c" stroke-width="0.6" stroke-linejoin="round"/><polygon points="278.6,642.6 288.1,641.7 289.2,635.0 279.8,635.7" fill="#f5dba6" stroke="#f5dba6" stroke-width="0.6" stroke-linejoin="round"/><polygon points="278.2,637.8 276.0,650.6 278.6,642.6 279.8,635.7" fill="#f0d49a" stroke="#f0d49a" stroke-width="0.6" stroke-linejoin="round"/><polygon points="278.2,637.8 295.8,636.3 289.2,635.0 279.8,635.7" fill="#f6dca8" stroke="#f6dca8" stroke-width="0.6" stroke-linejoin="round"/><g id="axis"><path d="M53.4,918.8 L46.2,928.4 L49.5,936 L54.9,944 L58,934 Z" fill="#08c808"/><path d="M54,921 L49,929 L53,937 Z" fill="#10e018" opacity="0.7"/><path d="M62,942.5 L88,941.5 L88,951.5 L62,952.5 Z" fill="#f00808"/><path d="M62,948.5 L88,947.5 L88,951.5 L62,952.5 Z" fill="#d00606"/><path d="M104.3,944.4 L86.5,935.8 Q83.4,936.5 84.2,945.5 Q85,955 88,955.6 Z" fill="#f80a0a"/><path d="M86.5,935.8 Q83.4,936.5 84.2,945.5 Q85,955 88,955.6 Q90.4,950 89.8,945 Q89.2,939 86.5,935.8 Z" fill="#b40808"/><path d="M57,933 L68.6,935 L67.5,945 Q64,953.5 58.5,950 Q56.4,948 56.6,944 Z" fill="#0a0ab4"/><path d="M68.4,903.7 L52.5,927.5 Q53,933 63,936.4 Q73,937.6 77.2,928.5 Z" fill="#0606e2"/><path d="M68.4,903.7 L52.5,927.5 Q53,931 58,934 Z" fill="#1212f0" opacity="0.6"/></g></svg>
<svg id="ui" width="1920" height="1032" viewBox="0 0 1920 1032">
<g id="title">
<rect x="5.2" y="3" width="9.8" height="8.8" rx="1.2" fill="#302e2f"/><rect x="5.2" y="11.9" width="9.8" height="0.9" fill="#6a7a84"/><rect x="5.2" y="13" width="9.8" height="1.8" fill="#1d5a7a"/><rect x="5.2" y="15" width="9.8" height="1.9" fill="#22688c"/>
<text x="24" y="16" font-size="12" fill="#000" textLength="13.5" lengthAdjust="spacingAndGlyphs">3D</text>
<text x="43" y="16" font-size="12" fill="#000" textLength="39.5" lengthAdjust="spacingAndGlyphs">ビューアー</text>
<path d="M1799.5,10.5 h11" stroke="#000" stroke-width="1" fill="none"/>
<rect x="1844.5" y="7.5" width="7.5" height="7.5" rx="1.5" fill="#f3f3f3" stroke="#000" stroke-width="1"/>
<path d="M1846.5,7.5 v-1 a1.5,1.5 0 0 1 1.5,-1.5 h4.5 a2,2 0 0 1 2,2 v4.5 a1.5,1.5 0 0 1 -1.5,1.5 h-1" fill="none" stroke="#000" stroke-width="1"/>
<path d="M1890,5.5 l10,10 M1900,5.5 l-10,10" stroke="#000" stroke-width="1" fill="none"/>
</g>
<g id="menu">
<text x="8" y="36.5" font-size="12" fill="#1a1a1a" textLength="49.5" lengthAdjust="spacingAndGlyphs">ファイル (F)</text>
<text x="72" y="36.5" font-size="12" fill="#1a1a1a" textLength="40.5" lengthAdjust="spacingAndGlyphs">編集 (E)</text>
<text x="127" y="36.5" font-size="12" fill="#1a1a1a" textLength="41.5" lengthAdjust="spacingAndGlyphs">表示 (V)</text>
<text x="183" y="36.5" font-size="12" fill="#1a1a1a" textLength="41.5" lengthAdjust="spacingAndGlyphs">設定 (P)</text>
<text x="239" y="36.5" font-size="12" fill="#1a1a1a" textLength="49" lengthAdjust="spacingAndGlyphs">ヘルプ (H)</text>
</g>
<g id="tb" fill="none" stroke-linecap="butt">
<rect x="38.9" y="47" width="1.2" height="26" fill="#8c8c8c"/>
<rect x="78.80000000000001" y="47" width="1.2" height="26" fill="#8c8c8c"/>
<rect x="118.7" y="47" width="1.2" height="26" fill="#8c8c8c"/>
<rect x="254.8" y="47" width="1.2" height="26" fill="#8c8c8c"/>
<rect x="326.79999999999995" y="47" width="1.2" height="26" fill="#8c8c8c"/>
<rect x="398.79999999999995" y="47" width="1.2" height="26" fill="#8c8c8c"/>
<rect x="470.79999999999995" y="47" width="1.2" height="26" fill="#8c8c8c"/>
<rect x="511.0" y="47" width="1.2" height="26" fill="#8c8c8c"/>
<rect x="646.6999999999999" y="47" width="1.2" height="26" fill="#8c8c8c"/>
<rect x="686.8" y="47" width="1.2" height="26" fill="#8c8c8c"/>
<rect x="8" y="48" width="14.5" height="13.5" rx="1.5" fill="#303030"/>
<rect x="8" y="62.3" width="14.5" height="1.7" fill="#3d4a55"/>
<rect x="8" y="64.7" width="12" height="1.4" fill="#5b8db4"/>
<rect x="8" y="66.6" width="12" height="3.2" fill="#1b6fb0"/>
<circle cx="25.1" cy="65.1" r="6.8" fill="#d0173a"/>
<path d="M25.1,60.6 v7.2 M21.9,64.9 l3.2,3.4 l3.2,-3.4" stroke="#fff" stroke-width="1.9" stroke-linejoin="miter"/>
<path d="M49.9,50 h8 l2.2,2.2 v16 h-10.2 z" fill="#f7f7f7" stroke="#484848" stroke-width="1.1"/>
<path d="M55.9,52 h9.6 l4.9,4.9 v13.3 h-14.5 z" fill="#f7f7f7" stroke="#484848" stroke-width="1.1"/>
<path d="M65.5,52 v4.9 h4.9 z" fill="#484848" stroke="#484848" stroke-width="0.8"/>
<path d="M58.2,59.7 h7.5 M58.2,62.4 h4.6" stroke="#484848" stroke-width="1.1"/>
<rect x="88" y="56" width="8.3" height="7.8" fill="#484848"/>
<path d="M96,59.9 l3.6,-2.8 v5.8 z" fill="#484848"/>
<path d="M101,58.2 l10.7,-7 M101,59.4 l10.7,-2.3 M101,60.6 l10.7,2.3 M101,61.8 l10.7,7" stroke="#6fc0e8" stroke-width="1.4"/>
<path d="M130.3,57.2 A9.7,9.7 0 0 1 148.3,54.6 M149.7,62.6 A9.7,9.7 0 0 1 131.7,65.2" stroke="#484848" stroke-width="2"/>
<path d="M150.2,50.4 v5.4 h-5.4 M129.8,69.4 v-5.4 h5.4" stroke="#484848" stroke-width="2"/>
<circle cx="170" cy="57.9" r="8.2" stroke="#484848" stroke-width="1.8"/>
<path d="M176,64.2 l6.6,6.2" stroke="#484848" stroke-width="2.2"/>
<circle cx="202" cy="57.9" r="8.2" stroke="#484848" stroke-width="1.8"/>
<path d="M208,64.2 l6.6,6.2" stroke="#484848" stroke-width="2.2"/>
<circle cx="234.1" cy="57.9" r="8.2" stroke="#484848" stroke-width="1.8"/>
<path d="M240.1,64.2 l6.6,6.2" stroke="#484848" stroke-width="2.2"/>
<path d="M166.3,57.9 h7.4 M170,54.2 v7.4" stroke="#484848" stroke-width="1.8"/>
<path d="M198.3,57.9 h7.4" stroke="#484848" stroke-width="1.8"/>
<path d="M230.5,53.5 h4.6 l2.7,2.7 v6.4 h-7.3 z" fill="#8a8a8a"/>
<path d="M276.1,48.2 v12.4 M276.1,60.6 l-9,9.3 M276.1,60.7 h3.9" stroke="#484848" stroke-width="1.5"/>
<path d="M281.5,60.7 h6.3" stroke="#b8183c" stroke-width="1.8"/>
<text x="266.6" y="56.8" font-size="8.5" font-weight="bold" fill="#484848" stroke="none" style="font-family:'Liberation Sans',sans-serif">X</text>
<path d="M285.90000000000003,66.3 A3,7 0 1 1 286.5,56" stroke="#484848" stroke-width="1.1"/>
<path d="M284.40000000000003,54.3 l3.8,0.4 l-0.9,3.7 z" fill="#484848"/>
<path d="M308.40000000000003,48.2 v12.4 M308.40000000000003,60.6 l-9,9.3 M308.40000000000003,60.7 h3.9" stroke="#484848" stroke-width="1.5"/>
<path d="M313.8,60.7 h6.3" stroke="#b8183c" stroke-width="1.8"/>
<text x="298.90000000000003" y="56.8" font-size="8.5" font-weight="bold" fill="#484848" stroke="none" style="font-family:'Liberation Sans',sans-serif">X</text>
<path d="M318.20000000000005,55.1 A3,7 0 1 0 318.8,65.4" stroke="#484848" stroke-width="1.1"/>
<path d="M316.70000000000005,67.1 l3.8,-0.4 l-0.9,-3.7 z" fill="#484848"/>
<path d="M348.4,48.2 v12.5 h10.6" stroke="#484848" stroke-width="1.5"/>
<text x="351.59999999999997" y="56.8" font-size="8.5" font-weight="bold" fill="#484848" stroke="none" style="font-family:'Liberation Sans',sans-serif">Y</text>
<path d="M339.0,70.1 l5.2,-5.6" stroke="#b8183c" stroke-width="1.9"/>
<g transform="translate(343.79999999999995,64.2) rotate(42)"><path d="M-3.2,-2.6 A6,2.9 0 1 1 -4.9,1.6" stroke="#484848" stroke-width="1.1"/></g>
<path d="M343.2,69.2 l3.6,-0.3 l-1.4,3.0 z" fill="#484848"/>
<path d="M380.4,48.2 v12.5 h10.6" stroke="#484848" stroke-width="1.5"/>
<text x="383.59999999999997" y="56.8" font-size="8.5" font-weight="bold" fill="#484848" stroke="none" style="font-family:'Liberation Sans',sans-serif">Y</text>
<path d="M371.0,70.1 l5.2,-5.6" stroke="#b8183c" stroke-width="1.9"/>
<g transform="translate(375.79999999999995,64.2) rotate(42)"><path d="M-3.2,-2.6 A6,2.9 0 1 1 -4.9,1.6" stroke="#484848" stroke-width="1.1"/></g>
<path d="M370.2,62.6 l0.3,3.6 l3.0,-1.6 z" fill="#484848"/>
<path d="M419.4,60.6 h11.2 M420,60.6 l-8.8,9.5" stroke="#484848" stroke-width="1.5"/>
<path d="M420,48 v7.8" stroke="#b8183c" stroke-width="1.8"/>
<text x="420.8" y="70.6" font-size="8.5" font-weight="bold" fill="#484848" stroke="none" style="font-family:'Liberation Sans',sans-serif">Z</text>
<path d="M413.4,53.3 A7.4,2.6 0 1 0 427.2,54.2" stroke="#484848" stroke-width="1.1"/>
<path d="M412.8,51.6 l3.6,0.2 l-1.6,3.0 z" fill="#484848"/>
<path d="M451.29999999999995,60.6 h11.2 M451.9,60.6 l-8.8,9.5" stroke="#484848" stroke-width="1.5"/>
<path d="M451.9,48 v7.8" stroke="#b8183c" stroke-width="1.8"/>
<text x="452.7" y="70.6" font-size="8.5" font-weight="bold" fill="#484848" stroke="none" style="font-family:'Liberation Sans',sans-serif">Z</text>
<path d="M458.5,53.3 A7.4,2.6 0 1 1 444.7,54.2" stroke="#484848" stroke-width="1.1"/>
<path d="M459.09999999999997,51.6 l-3.6,0.2 l1.6,3.0 z" fill="#484848"/>
<path d="M486.8,50.9 h-3.4 v3 M483.4,57.5 v5 M483.4,66 v3 h3.4" stroke="#484848" stroke-width="1.2"/>
<path d="M488.1,49.1 L500.6,52.2 V68.4 L488.1,70.6 Z" fill="#1a7fd0"/>
<path d="M489.5,56.5 A4,4.6 0 0 0 489.8,64.6 h5" stroke="#484848" stroke-width="1.1" opacity="0.75"/>
<path d="M520.9,60 L530,49.7 V56 H543 V64 H530 V70.4 Z" fill="#1a80cc"/>
<path d="M575,60 L565.9,49.7 V56 H553 V64 H565.9 V70.4 Z" fill="#1a80cc"/>
<path d="M596,49.2 L606.8,57.8 H600.2 V70.7 H592 V57.8 H585.2 Z" fill="#1a80cc"/>
<path d="M628,70.7 L638.9,62.3 H632 V49.2 H624 V62.3 H617.1 Z" fill="#1a80cc"/>
<path d="M667.9,48.2 L678.4,54.3 L667.9,60.4 L657.2,54.3 Z" fill="#c9c9c9" stroke="#5a5a5a" stroke-width="1" stroke-linejoin="round"/>
<path d="M657.2,54.3 L667.9,60.4 V71.9 L657.2,65.8 Z" fill="#b2b2b2" stroke="#5a5a5a" stroke-width="1" stroke-linejoin="round"/>
<path d="M678.4,54.3 L667.9,60.4 V71.9 L678.4,65.8 Z" fill="#bdbdbd" stroke="#5a5a5a" stroke-width="1" stroke-linejoin="round"/>
<rect x="693.5" y="45.5" width="29.4" height="29" fill="#b9d8f6" stroke="#2d7dd2" stroke-width="1"/>
<path d="M707.9,56.6 L717.1,63.5 L707.9,70.4 L698.7,63.5 Z" fill="#e8a11c"/>
<path d="M707.9,53 L717.1,59.9 L707.9,66.8 L698.7,59.9 Z" fill="#2f5f8a"/>
<path d="M707.9,49.1 L717.1,56 L707.9,62.9 L698.7,56 Z" fill="#1a7fd0"/>
</g>
<g id="info">
<rect x="0" y="106" width="1725" height="1.2" fill="#a8a8a8"/>
<path d="M13,84.5 L19.8,97.5 L6.2,97.5 Z" fill="#f5c211" stroke="#f5c211" stroke-width="1.5" stroke-linejoin="round"/>
<rect x="12.2" y="88" width="1.7" height="5" fill="#1a1a1a"/><rect x="12.2" y="94" width="1.7" height="1.8" fill="#1a1a1a"/>
<text x="26" y="96" font-size="12" fill="#1a1a1a" textLength="444.5" lengthAdjust="spacingAndGlyphs">基板のアウトラインが欠落しているか、不正な形式です。完全な分析のためにDRCを実行します。</text>
<defs><linearGradient id="cb" x1="0" y1="0" x2="0" y2="1"><stop offset="0" stop-color="#f6d2d0"/><stop offset="0.45" stop-color="#ecaeaa"/><stop offset="0.5" stop-color="#d47874"/><stop offset="1" stop-color="#e49a94"/></linearGradient></defs>
<rect x="1707.5" y="84.5" width="15" height="15" rx="2" fill="url(#cb)" stroke="#9a3a3a" stroke-width="1"/>
<path d="M1711,88.5 l8,7 M1719,88.5 l-8,7" stroke="#fff" stroke-width="2.6" fill="none"/>
</g>
<g id="panel-items">
<text x="1734" y="92" font-size="12" fill="#222" textLength="23.5" lengthAdjust="spacingAndGlyphs">外観</text>
<rect x="1740" y="110" width="14" height="11" fill="#4a4231"/>
<g transform="translate(1767,116)"><circle r="8" fill="#555"/><path d="M-6.4,0 C-4,-4.2 4,-4.2 6.4,0 C4,4.2 -4,4.2 -6.4,0Z" fill="#fff"/><circle r="2.1" fill="none" stroke="#666" stroke-width="1.1"/></g>
<text x="1780.5" y="120" font-size="11" fill="#1a1a1a" textLength="43" lengthAdjust="spacingAndGlyphs">基板本体</text>
<rect x="1740" y="128" width="14" height="11" fill="#b39c00"/>
<g transform="translate(1767,134)"><circle r="8" fill="#555"/><path d="M-6.4,0 C-4,-4.2 4,-4.2 6.4,0 C4,4.2 -4,4.2 -6.4,0Z" fill="#fff"/><circle r="2.1" fill="none" stroke="#666" stroke-width="1.1"/></g>
<text x="1780.5" y="138" font-size="11" fill="#1a1a1a" textLength="17.5" lengthAdjust="spacingAndGlyphs">F.Cu</text>
<rect x="1740" y="146" width="14" height="11" fill="#b39c00"/>
<g transform="translate(1767,152)"><circle r="8" fill="#555"/><path d="M-6.4,0 C-4,-4.2 4,-4.2 6.4,0 C4,4.2 -4,4.2 -6.4,0Z" fill="#fff"/><circle r="2.1" fill="none" stroke="#666" stroke-width="1.1"/></g>
<text x="1780.5" y="156" font-size="11" fill="#1a1a1a" textLength="20.5" lengthAdjust="spacingAndGlyphs">B.Cu</text>
<g transform="translate(1767,170)"><circle r="7.8" fill="#bcbcbc"/><path d="M-5.2,4.6 L5.2,-4.6" stroke="#f4f4f4" stroke-width="4.6" stroke-linecap="round"/><path d="M-4.6,4.1 L4.6,-4.1" stroke="#555" stroke-width="1.7" stroke-linecap="round"/></g>
<text x="1780.5" y="174" font-size="11" fill="#1a1a1a" textLength="32" lengthAdjust="spacingAndGlyphs">接着剤</text>
<rect x="1740" y="182" width="14" height="11" fill="#808080"/>
<g transform="translate(1767,188)"><circle r="8" fill="#555"/><path d="M-6.4,0 C-4,-4.2 4,-4.2 6.4,0 C4,4.2 -4,4.2 -6.4,0Z" fill="#fff"/><circle r="2.1" fill="none" stroke="#666" stroke-width="1.1"/></g>
<text x="1780.5" y="192" font-size="11" fill="#1a1a1a" textLength="91.5" lengthAdjust="spacingAndGlyphs">ハンダペースト レイヤー</text>
<rect x="1740" y="200" width="14" height="11" fill="#e6e6e6"/>
<g transform="translate(1767,206)"><circle r="8" fill="#555"/><path d="M-6.4,0 C-4,-4.2 4,-4.2 6.4,0 C4,4.2 -4,4.2 -6.4,0Z" fill="#fff"/><circle r="2.1" fill="none" stroke="#666" stroke-width="1.1"/></g>
<text x="1780.5" y="210" font-size="11" fill="#1a1a1a" textLength="53.5" lengthAdjust="spacingAndGlyphs">F.Silkscreen</text>
<rect x="1740" y="218" width="14" height="11" fill="#e4e6e6"/>
<g transform="translate(1767,224)"><circle r="8" fill="#555"/><path d="M-6.4,0 C-4,-4.2 4,-4.2 6.4,0 C4,4.2 -4,4.2 -6.4,0Z" fill="#fff"/><circle r="2.1" fill="none" stroke="#666" stroke-width="1.1"/></g>
<text x="1780.5" y="228" font-size="11" fill="#1a1a1a" textLength="56.5" lengthAdjust="spacingAndGlyphs">B.Silkscreen</text>
<rect x="1740" y="236" width="14" height="11" fill="#2e5545"/>
<g transform="translate(1767,242)"><circle r="8" fill="#555"/><path d="M-6.4,0 C-4,-4.2 4,-4.2 6.4,0 C4,4.2 -4,4.2 -6.4,0Z" fill="#fff"/><circle r="2.1" fill="none" stroke="#666" stroke-width="1.1"/></g>
<text x="1780.5" y="246" font-size="11" fill="#1a1a1a" textLength="30.5" lengthAdjust="spacingAndGlyphs">F.Mask</text>
<rect x="1740" y="254" width="14" height="11" fill="#2e5545"/>
<g transform="translate(1767,260)"><circle r="8" fill="#555"/><path d="M-6.4,0 C-4,-4.2 4,-4.2 6.4,0 C4,4.2 -4,4.2 -6.4,0Z" fill="#fff"/><circle r="2.1" fill="none" stroke="#666" stroke-width="1.1"/></g>
<text x="1780.5" y="264" font-size="11" fill="#1a1a1a" textLength="33.5" lengthAdjust="spacingAndGlyphs">B.Mask</text>
<rect x="1740" y="272" width="14" height="11" fill="#fff"/><rect x="1740.0" y="272.00" width="3.5" height="3.67" fill="#dcdcdc"/><rect x="1747.0" y="272.00" width="3.5" height="3.67" fill="#dcdcdc"/><rect x="1743.5" y="275.67" width="3.5" height="3.67" fill="#dcdcdc"/><rect x="1750.5" y="275.67" width="3.5" height="3.67" fill="#dcdcdc"/><rect x="1740.0" y="279.34" width="3.5" height="3.67" fill="#dcdcdc"/><rect x="1747.0" y="279.34" width="3.5" height="3.67" fill="#dcdcdc"/>
<g transform="translate(1767,278)"><circle r="7.8" fill="#bcbcbc"/><path d="M-5.2,4.6 L5.2,-4.6" stroke="#f4f4f4" stroke-width="4.6" stroke-linecap="round"/><path d="M-4.6,4.1 L4.6,-4.1" stroke="#555" stroke-width="1.7" stroke-linecap="round"/></g>
<text x="1780.5" y="282" font-size="11" fill="#1a1a1a" textLength="69" lengthAdjust="spacingAndGlyphs">User.Drawings</text>
<rect x="1740" y="290" width="14" height="11" fill="#fff"/><rect x="1740.0" y="290.00" width="3.5" height="3.67" fill="#dcdcdc"/><rect x="1747.0" y="290.00" width="3.5" height="3.67" fill="#dcdcdc"/><rect x="1743.5" y="293.67" width="3.5" height="3.67" fill="#dcdcdc"/><rect x="1750.5" y="293.67" width="3.5" height="3.67" fill="#dcdcdc"/><rect x="1740.0" y="297.34" width="3.5" height="3.67" fill="#dcdcdc"/><rect x="1747.0" y="297.34" width="3.5" height="3.67" fill="#dcdcdc"/>
<g transform="translate(1767,296)"><circle r="7.8" fill="#bcbcbc"/><path d="M-5.2,4.6 L5.2,-4.6" stroke="#f4f4f4" stroke-width="4.6" stroke-linecap="round"/><path d="M-4.6,4.1 L4.6,-4.1" stroke="#555" stroke-width="1.7" stroke-linecap="round"/></g>
<text x="1780.5" y="300" font-size="11" fill="#1a1a1a" textLength="75" lengthAdjust="spacingAndGlyphs">User.Comments</text>
<rect x="1740" y="308" width="14" height="11" fill="#fff"/><rect x="1740.0" y="308.00" width="3.5" height="3.67" fill="#dcdcdc"/><rect x="1747.0" y="308.00" width="3.5" height="3.67" fill="#dcdcdc"/><rect x="1743.5" y="311.67" width="3.5" height="3.67" fill="#dcdcdc"/><rect x="1750.5" y="311.67" width="3.5" height="3.67" fill="#dcdcdc"/><rect x="1740.0" y="315.34" width="3.5" height="3.67" fill="#dcdcdc"/><rect x="1747.0" y="315.34" width="3.5" height="3.67" fill="#dcdcdc"/>
<g transform="translate(1767,314)"><circle r="7.8" fill="#bcbcbc"/><path d="M-5.2,4.6 L5.2,-4.6" stroke="#f4f4f4" stroke-width="4.6" stroke-linecap="round"/><path d="M-4.6,4.1 L4.6,-4.1" stroke="#555" stroke-width="1.7" stroke-linecap="round"/></g>
<text x="1780.5" y="318" font-size="11" fill="#1a1a1a" textLength="45.5" lengthAdjust="spacingAndGlyphs">User.Eco1</text>
<rect x="1740" y="326" width="14" height="11" fill="#fff"/><rect x="1740.0" y="326.00" width="3.5" height="3.67" fill="#dcdcdc"/><rect x="1747.0" y="326.00" width="3.5" height="3.67" fill="#dcdcdc"/><rect x="1743.5" y="329.67" width="3.5" height="3.67" fill="#dcdcdc"/><rect x="1750.5" y="329.67" width="3.5" height="3.67" fill="#dcdcdc"/><rect x="1740.0" y="333.34" width="3.5" height="3.67" fill="#dcdcdc"/><rect x="1747.0" y="333.34" width="3.5" height="3.67" fill="#dcdcdc"/>
<g transform="translate(1767,332)"><circle r="7.8" fill="#bcbcbc"/><path d="M-5.2,4.6 L5.2,-4.6" stroke="#f4f4f4" stroke-width="4.6" stroke-linecap="round"/><path d="M-4.6,4.1 L4.6,-4.1" stroke="#555" stroke-width="1.7" stroke-linecap="round"/></g>
<text x="1780.5" y="336" font-size="11" fill="#1a1a1a" textLength="46" lengthAdjust="spacingAndGlyphs">User.Eco2</text>
<rect x="1740" y="344" width="14" height="11" fill="#c2c2c2"/>
<g transform="translate(1767,350)"><circle r="7.8" fill="#bcbcbc"/><path d="M-5.2,4.6 L5.2,-4.6" stroke="#f4f4f4" stroke-width="4.6" stroke-linecap="round"/><path d="M-4.6,4.1 L4.6,-4.1" stroke="#555" stroke-width="1.7" stroke-linecap="round"/></g>
<text x="1780.5" y="354" font-size="11" fill="#1a1a1a" textLength="28" lengthAdjust="spacingAndGlyphs">User.1</text>
<rect x="1740" y="362" width="14" height="11" fill="#4d8fe0"/>
<g transform="translate(1767,368)"><circle r="7.8" fill="#bcbcbc"/><path d="M-5.2,4.6 L5.2,-4.6" stroke="#f4f4f4" stroke-width="4.6" stroke-linecap="round"/><path d="M-4.6,4.1 L4.6,-4.1" stroke="#555" stroke-width="1.7" stroke-linecap="round"/></g>
<text x="1780.5" y="372" font-size="11" fill="#1a1a1a" textLength="29" lengthAdjust="spacingAndGlyphs">User.2</text>
<rect x="1740" y="380" width="14" height="11" fill="#a9dcd6"/>
<g transform="translate(1767,386)"><circle r="7.8" fill="#bcbcbc"/><path d="M-5.2,4.6 L5.2,-4.6" stroke="#f4f4f4" stroke-width="4.6" stroke-linecap="round"/><path d="M-4.6,4.1 L4.6,-4.1" stroke="#555" stroke-width="1.7" stroke-linecap="round"/></g>
<text x="1780.5" y="390" font-size="11" fill="#1a1a1a" textLength="29" lengthAdjust="spacingAndGlyphs">User.3</text>
<rect x="1740" y="398" width="14" height="11" fill="#dcc544"/>
<g transform="translate(1767,404)"><circle r="7.8" fill="#bcbcbc"/><path d="M-5.2,4.6 L5.2,-4.6" stroke="#f4f4f4" stroke-width="4.6" stroke-linecap="round"/><path d="M-4.6,4.1 L4.6,-4.1" stroke="#555" stroke-width="1.7" stroke-linecap="round"/></g>
<text x="1780.5" y="408" font-size="11" fill="#1a1a1a" textLength="29" lengthAdjust="spacingAndGlyphs">User.4</text>
<g transform="translate(1767,430.7)"><circle r="8" fill="#555"/><path d="M-6.4,0 C-4,-4.2 4,-4.2 6.4,0 C4,4.2 -4,4.2 -6.4,0Z" fill="#fff"/><circle r="2.1" fill="none" stroke="#666" stroke-width="1.1"/></g>
<text x="1780.5" y="434.7" font-size="11" fill="#1a1a1a" textLength="77" lengthAdjust="spacingAndGlyphs">スルーホール モデル</text>
<g transform="translate(1767,448.7)"><circle r="8" fill="#555"/><path d="M-6.4,0 C-4,-4.2 4,-4.2 6.4,0 C4,4.2 -4,4.2 -6.4,0Z" fill="#fff"/><circle r="2.1" fill="none" stroke="#666" stroke-width="1.1"/></g>
<text x="1780.5" y="452.7" font-size="11" fill="#1a1a1a" textLength="69" lengthAdjust="spacingAndGlyphs">表面実装モデル</text>
<g transform="translate(1767,466.7)"><circle r="8" fill="#555"/><path d="M-6.4,0 C-4,-4.2 4,-4.2 6.4,0 C4,4.2 -4,4.2 -6.4,0Z" fill="#fff"/><circle r="2.1" fill="none" stroke="#666" stroke-width="1.1"/></g>
<text x="1780.5" y="470.7" font-size="11" fill="#1a1a1a" textLength="47" lengthAdjust="spacingAndGlyphs">仮想モデル</text>
<g transform="translate(1767,484.7)"><circle r="8" fill="#555"/><path d="M-6.4,0 C-4,-4.2 4,-4.2 6.4,0 C4,4.2 -4,4.2 -6.4,0Z" fill="#fff"/><circle r="2.1" fill="none" stroke="#666" stroke-width="1.1"/></g>
<text x="1780.5" y="488.7" font-size="11" fill="#1a1a1a" textLength="104" lengthAdjust="spacingAndGlyphs">POSファイルにないモデル</text>
<g transform="translate(1767,502.7)"><circle r="7.8" fill="#bcbcbc"/><path d="M-5.2,4.6 L5.2,-4.6" stroke="#f4f4f4" stroke-width="4.6" stroke-linecap="round"/><path d="M-4.6,4.1 L4.6,-4.1" stroke="#555" stroke-width="1.7" stroke-linecap="round"/></g>
<text x="1780.5" y="506.7" font-size="11" fill="#1a1a1a" textLength="115" lengthAdjust="spacingAndGlyphs">未実装が指定されたモデル</text>
<g transform="translate(1767,520.7)"><circle r="7.8" fill="#bcbcbc"/><path d="M-5.2,4.6 L5.2,-4.6" stroke="#f4f4f4" stroke-width="4.6" stroke-linecap="round"/><path d="M-4.6,4.1 L4.6,-4.1" stroke="#555" stroke-width="1.7" stroke-linecap="round"/></g>
<text x="1780.5" y="524.7" font-size="11" fill="#1a1a1a" textLength="127.5" lengthAdjust="spacingAndGlyphs">モデルのバウンディング ボックス</text>
<g transform="translate(1767,547.8)"><circle r="8" fill="#555"/><path d="M-6.4,0 C-4,-4.2 4,-4.2 6.4,0 C4,4.2 -4,4.2 -6.4,0Z" fill="#fff"/><circle r="2.1" fill="none" stroke="#666" stroke-width="1.1"/></g>
<text x="1780.5" y="551.8" font-size="11" fill="#1a1a1a" textLength="10.5" lengthAdjust="spacingAndGlyphs">値</text>
<g transform="translate(1767,565.8)"><circle r="8" fill="#555"/><path d="M-6.4,0 C-4,-4.2 4,-4.2 6.4,0 C4,4.2 -4,4.2 -6.4,0Z" fill="#fff"/><circle r="2.1" fill="none" stroke="#666" stroke-width="1.1"/></g>
<text x="1780.5" y="569.8" font-size="11" fill="#1a1a1a" textLength="46.5" lengthAdjust="spacingAndGlyphs">リファレンス</text>
<g transform="translate(1767,583.8)"><circle r="8" fill="#555"/><path d="M-6.4,0 C-4,-4.2 4,-4.2 6.4,0 C4,4.2 -4,4.2 -6.4,0Z" fill="#fff"/><circle r="2.1" fill="none" stroke="#666" stroke-width="1.1"/></g>
<text x="1780.5" y="587.8" font-size="11" fill="#1a1a1a" textLength="94.7" lengthAdjust="spacingAndGlyphs">フットプリントのテキスト</text>
<g transform="translate(1767,601.8)"><circle r="7.8" fill="#bcbcbc"/><path d="M-5.2,4.6 L5.2,-4.6" stroke="#f4f4f4" stroke-width="4.6" stroke-linecap="round"/><path d="M-4.6,4.1 L4.6,-4.1" stroke="#555" stroke-width="1.7" stroke-linecap="round"/></g>
<text x="1780.5" y="605.8" font-size="11" fill="#1a1a1a" textLength="105.5" lengthAdjust="spacingAndGlyphs">基板外のシルクスクリーン</text>
<g transform="translate(1767,628.8)"><circle r="8" fill="#555"/><path d="M-6.4,0 C-4,-4.2 4,-4.2 6.4,0 C4,4.2 -4,4.2 -6.4,0Z" fill="#fff"/><circle r="2.1" fill="none" stroke="#666" stroke-width="1.1"/></g>
<text x="1780.5" y="632.8" font-size="11" fill="#1a1a1a" textLength="24" lengthAdjust="spacingAndGlyphs">3D軸</text>
<rect x="1740" y="640" width="14" height="11" fill="#cbcbe6"/>
<rect x="1740" y="656" width="14" height="11" fill="#666680"/>
<text x="1779" y="650" font-size="11" fill="#1a1a1a" textLength="62" lengthAdjust="spacingAndGlyphs">背景の開始色</text>
<text x="1779" y="666" font-size="11" fill="#1a1a1a" textLength="62" lengthAdjust="spacingAndGlyphs">背景の終端色</text>
<rect x="1735.5" y="860.5" width="12" height="12" rx="2.5" fill="#f6f6f6" stroke="#444" stroke-width="1"/>
<rect x="1735.5" y="880.5" width="12" height="12" rx="2.5" fill="#f6f6f6" stroke="#444" stroke-width="1"/>
<text x="1751.5" y="871" font-size="12" fill="#1a1a1a" textLength="125.5" lengthAdjust="spacingAndGlyphs">基板スタックアップの色を使用</text>
<text x="1751.5" y="891" font-size="12" fill="#1a1a1a" textLength="131.5" lengthAdjust="spacingAndGlyphs">基板エディタの銅色を使用する</text>
<rect x="1733" y="900.5" width="183" height="1" fill="#a0a0a0"/>
<text x="1735.5" y="922" font-size="12" fill="#1a1a1a" textLength="94" lengthAdjust="spacingAndGlyphs">プリセット (Ctrl+Tab):</text>
<text x="1735.5" y="972" font-size="12" fill="#1a1a1a" textLength="99.5" lengthAdjust="spacingAndGlyphs">ビューポート(Shift+Tab):</text>
<rect x="1735.5" y="930.5" width="179" height="21.5" rx="2" fill="#fff" stroke="#d6d6d6" stroke-width="1"/>
<path d="M1736.5,952.0 h177" stroke="#b0b0b0" stroke-width="1"/>
<path d="M1902,939.5 l4,4 l4,-4" stroke="#333" stroke-width="1" fill="none"/>
<rect x="1735.5" y="979.5" width="179" height="21.5" rx="2" fill="#fff" stroke="#d6d6d6" stroke-width="1"/>
<path d="M1736.5,1001.0 h177" stroke="#b0b0b0" stroke-width="1"/>
<path d="M1902,988.5 l4,4 l4,-4" stroke="#333" stroke-width="1" fill="none"/>
<text x="1739.5" y="946" font-size="12" fill="#1a1a1a" textLength="126.5" lengthAdjust="spacingAndGlyphs">PCBのプロットの設定に従う</text>
<text x="1739.5" y="995" font-size="12" fill="#1a1a1a" textLength="14" lengthAdjust="spacingAndGlyphs">---</text>
</g>
<g id="status">
<rect x="0" y="1008" width="1727" height="1" fill="#fafafa"/><rect x="1725" y="107" width="1.2" height="902" fill="#f6f6f6"/><rect x="1727.5" y="98" width="2" height="910" fill="#e4e4e4"/><rect x="1728" y="1009" width="192" height="1" fill="#d8d8d8"/>
<rect x="1301" y="1010" width="1" height="20" fill="#d4d4d4"/>
<rect x="1481" y="1010" width="1" height="20" fill="#d4d4d4"/>
<rect x="1621" y="1010" width="1" height="20" fill="#d4d4d4"/>
<rect x="1761" y="1010" width="1" height="20" fill="#d4d4d4"/>
<text x="3" y="1026" font-size="12" fill="#1a1a1a" textLength="127" lengthAdjust="spacingAndGlyphs">最終レンダリング時間 5 ms</text>
<text x="1486" y="1026" font-size="12" fill="#1a1a1a" textLength="38" lengthAdjust="spacingAndGlyphs">dx 0.00</text>
<text x="1626" y="1026" font-size="12" fill="#1a1a1a" textLength="38" lengthAdjust="spacingAndGlyphs">dy 0.00</text>
<text x="1766" y="1026" font-size="12" fill="#1a1a1a" textLength="53" lengthAdjust="spacingAndGlyphs">zoom 1.33</text>
</g>
</svg>
</body></html>
